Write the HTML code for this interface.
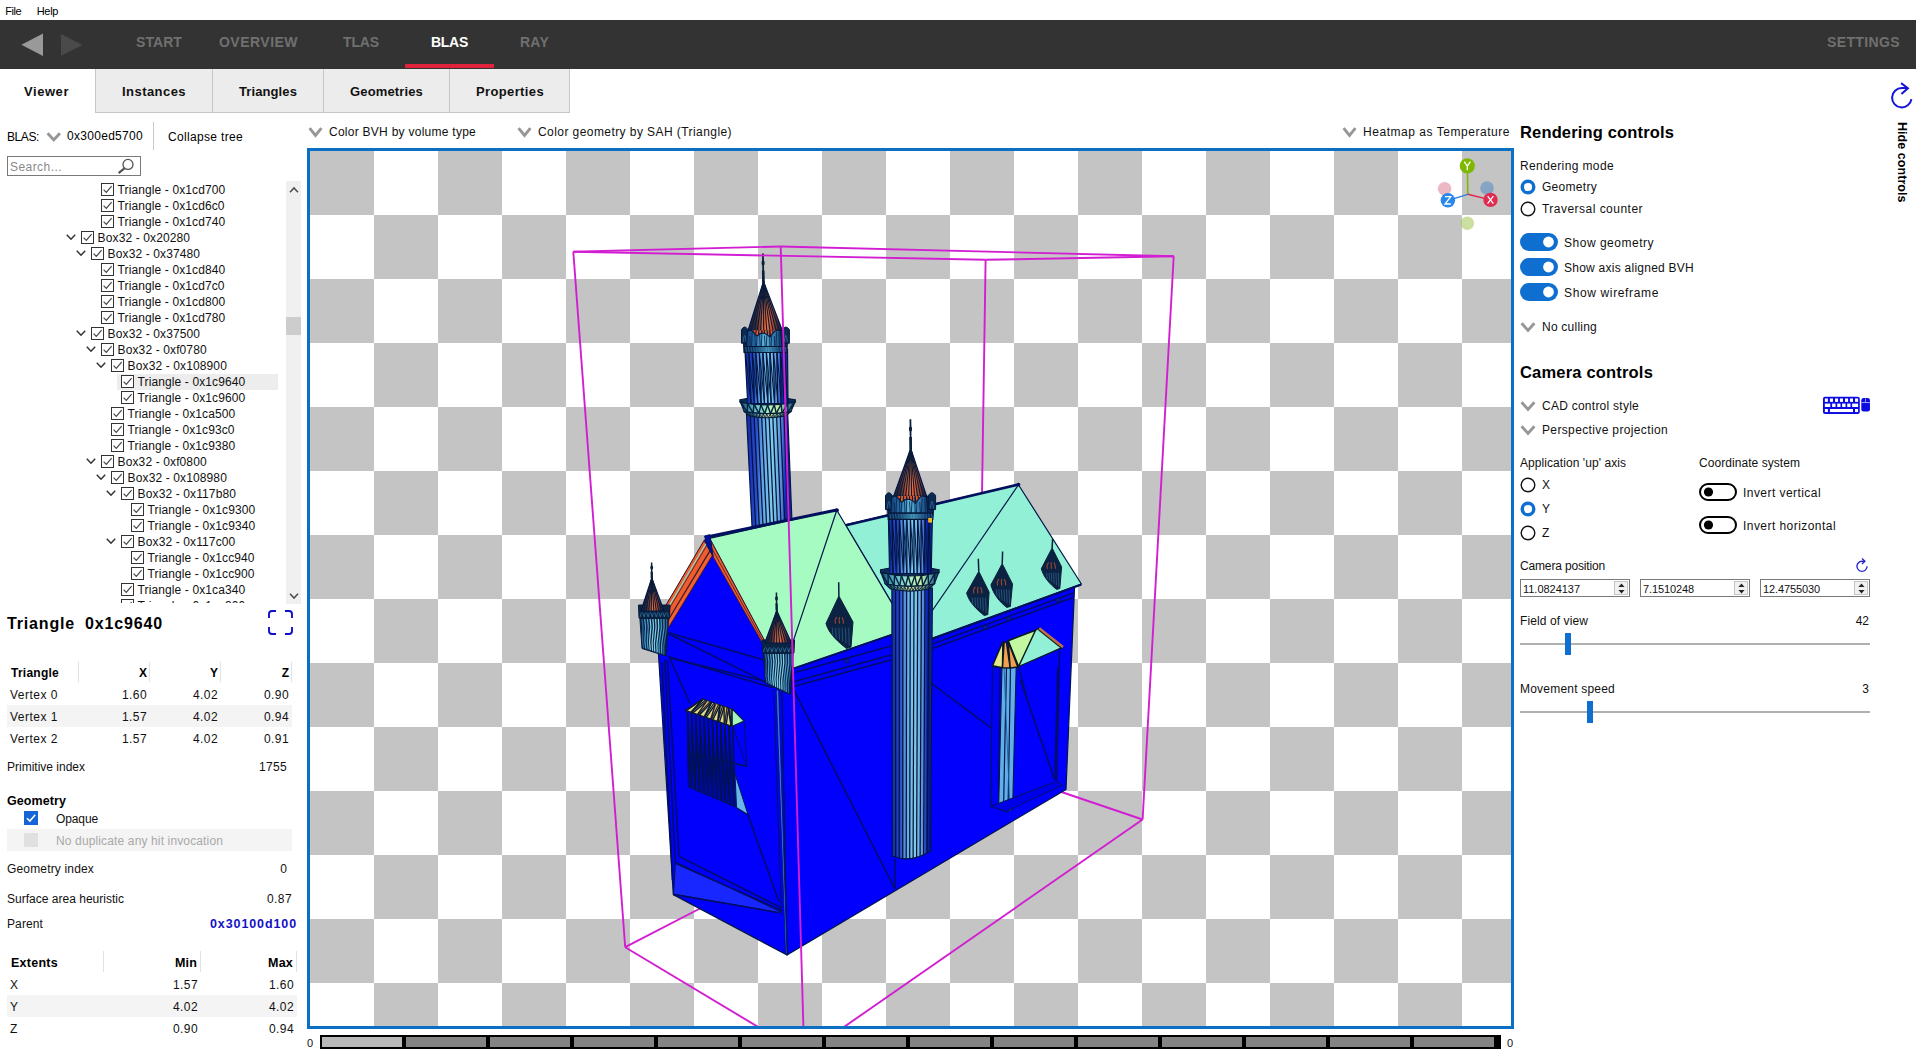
<!DOCTYPE html>
<html><head><meta charset="utf-8"><title>BLAS Viewer</title>
<style>
html,body{margin:0;padding:0;background:#fff;}
body{width:1916px;height:1056px;position:relative;overflow:hidden;font-family:"Liberation Sans",sans-serif;}
.r{position:absolute;display:block;}
.t{position:absolute;white-space:pre;font-family:"Liberation Sans",sans-serif;}
</style></head><body>
<svg class="r" style="left:0;top:0" width="1916" height="1056" viewBox="0 0 1916 1056">
<defs>
<pattern id="chk" x="310" y="151" width="128" height="128" patternUnits="userSpaceOnUse">
<rect width="128" height="128" fill="#fff"/><rect width="64" height="64" fill="#c4c4c4"/><rect x="64" y="64" width="64" height="64" fill="#c4c4c4"/></pattern>
<clipPath id="vp"><rect x="310" y="151" width="1201" height="875"/></clipPath>
<linearGradient id="shaft" x1="0" x2="1" y1="0" y2="0">
<stop offset="0" stop-color="#123088"/><stop offset="0.08" stop-color="#1a34c4"/><stop offset="0.22" stop-color="#2c50c8"/>
<stop offset="0.32" stop-color="#5a96e0"/><stop offset="0.44" stop-color="#70b8e8"/><stop offset="0.56" stop-color="#80cce8"/>
<stop offset="0.68" stop-color="#70b0e4"/><stop offset="0.78" stop-color="#5484d6"/><stop offset="0.85" stop-color="#1028c0"/>
<stop offset="0.93" stop-color="#0a1a80"/><stop offset="1" stop-color="#1c34a8"/></linearGradient>
<linearGradient id="shaftd" x1="0" x2="1" y1="0" y2="0">
<stop offset="0" stop-color="#0a2060"/><stop offset="0.15" stop-color="#1430b0"/><stop offset="0.35" stop-color="#3a78c8"/>
<stop offset="0.5" stop-color="#5ab0dc"/><stop offset="0.62" stop-color="#58a8d8"/><stop offset="0.8" stop-color="#1c44b0"/>
<stop offset="1" stop-color="#0a1c60"/></linearGradient>
<linearGradient id="cone" x1="0" x2="1" y1="0" y2="0">
<stop offset="0" stop-color="#0c2040"/><stop offset="0.25" stop-color="#3a2a38"/><stop offset="0.42" stop-color="#d85a30"/>
<stop offset="0.55" stop-color="#f87038"/><stop offset="0.68" stop-color="#c85030"/><stop offset="0.85" stop-color="#3a2838"/><stop offset="1" stop-color="#0c2040"/></linearGradient>
<linearGradient id="crown" x1="0" x2="1" y1="0" y2="0">
<stop offset="0" stop-color="#0a2248"/><stop offset="0.2" stop-color="#0e3060"/><stop offset="0.4" stop-color="#2a6890"/>
<stop offset="0.55" stop-color="#4a9ab8"/><stop offset="0.7" stop-color="#2a6890"/><stop offset="0.85" stop-color="#0e2c68"/><stop offset="1" stop-color="#0a2248"/></linearGradient>
<linearGradient id="balc2" x1="0" x2="1" y1="0" y2="0">
<stop offset="0" stop-color="#0c3058"/><stop offset="0.2" stop-color="#4a8890"/><stop offset="0.5" stop-color="#d8e498"/>
<stop offset="0.75" stop-color="#90b890"/><stop offset="1" stop-color="#0c3058"/></linearGradient>
<linearGradient id="petal" x1="0" x2="1" y1="0" y2="0">
<stop offset="0" stop-color="#103a70"/><stop offset="0.25" stop-color="#2a70a8"/><stop offset="0.5" stop-color="#62b8d8"/>
<stop offset="0.72" stop-color="#3a88b8"/><stop offset="1" stop-color="#103a70"/></linearGradient>
<linearGradient id="balc" x1="0" x2="1" y1="0" y2="0">
<stop offset="0" stop-color="#0c3058"/><stop offset="0.12" stop-color="#3a8aa8"/><stop offset="0.35" stop-color="#7ad4d0"/>
<stop offset="0.55" stop-color="#b4f4b8"/><stop offset="0.7" stop-color="#c8f0a0"/><stop offset="0.85" stop-color="#5aa8b0"/><stop offset="1" stop-color="#0c3058"/></linearGradient>
</defs>
<rect x="310" y="151" width="1201" height="875" fill="url(#chk)"/>
<g clip-path="url(#vp)">
<line x1="985.6" y1="259.8" x2="982.0" y2="495.0" stroke="#d21ed2" stroke-width="1.9" />
<line x1="625.2" y1="947.2" x2="700.0" y2="908.5" stroke="#d21ed2" stroke-width="1.9" />
<line x1="1142.6" y1="819.5" x2="1060.0" y2="791.5" stroke="#d21ed2" stroke-width="1.9" />
<line x1="762.9" y1="253.6" x2="763.4" y2="282.0" stroke="#0a2038" stroke-width="1.8" />
<ellipse cx="763.1" cy="263.0" rx="1.6" ry="2.7" fill="#0a2038"/>
<line x1="763.2" y1="270.6" x2="763.4" y2="282.0" stroke="#0a2038" stroke-width="2.6" />
<polygon points="763.5,281.5 783.3,333.0 747.3,333.0" fill="url(#cone)" stroke="#001648" stroke-width="1.2" stroke-linejoin="round" />
<line x1="763.5" y1="281.5" x2="750.6" y2="333.0" stroke="#0a1c38" stroke-width="1.15" />
<line x1="763.5" y1="281.5" x2="753.8" y2="333.0" stroke="#0a1c38" stroke-width="1.15" />
<line x1="763.5" y1="281.5" x2="757.1" y2="333.0" stroke="#0a1c38" stroke-width="1.15" />
<line x1="763.5" y1="281.5" x2="760.4" y2="333.0" stroke="#0a1c38" stroke-width="1.15" />
<line x1="763.5" y1="281.5" x2="763.7" y2="333.0" stroke="#0a1c38" stroke-width="1.15" />
<line x1="763.5" y1="281.5" x2="766.9" y2="333.0" stroke="#0a1c38" stroke-width="1.15" />
<line x1="763.5" y1="281.5" x2="770.2" y2="333.0" stroke="#0a1c38" stroke-width="1.15" />
<line x1="763.5" y1="281.5" x2="773.5" y2="333.0" stroke="#0a1c38" stroke-width="1.15" />
<line x1="763.5" y1="281.5" x2="776.8" y2="333.0" stroke="#0a1c38" stroke-width="1.15" />
<line x1="763.5" y1="281.5" x2="780.0" y2="333.0" stroke="#0a1c38" stroke-width="1.15" />
<polygon points="746.5,414.0 787.7,414.0 792.0,523.0 752.2,530.0" fill="url(#shaft)" stroke="#001648" stroke-width="1.2" stroke-linejoin="round" />
<line x1="750.2" y1="414.0" x2="755.8" y2="529.4" stroke="#00143c" stroke-width="1.25" />
<line x1="754.0" y1="414.0" x2="759.4" y2="528.7" stroke="#00143c" stroke-width="1.25" />
<line x1="757.7" y1="414.0" x2="763.1" y2="528.1" stroke="#00143c" stroke-width="1.25" />
<line x1="761.5" y1="414.0" x2="766.7" y2="527.5" stroke="#00143c" stroke-width="1.25" />
<line x1="765.2" y1="414.0" x2="770.3" y2="526.8" stroke="#00143c" stroke-width="1.25" />
<line x1="769.0" y1="414.0" x2="773.9" y2="526.2" stroke="#00143c" stroke-width="1.25" />
<line x1="772.7" y1="414.0" x2="777.5" y2="525.5" stroke="#00143c" stroke-width="1.25" />
<line x1="776.5" y1="414.0" x2="781.1" y2="524.9" stroke="#00143c" stroke-width="1.25" />
<line x1="780.2" y1="414.0" x2="784.8" y2="524.3" stroke="#00143c" stroke-width="1.25" />
<line x1="784.0" y1="414.0" x2="788.4" y2="523.6" stroke="#00143c" stroke-width="1.25" />
<path d="M739.9 399.7 Q767.6 394.0 795.4 399.7 L795.4 402.1 Q767.6 407.6 739.9 402.1 Z" fill="#0c2c58" stroke="#06183a" stroke-width="1.1"/>
<path d="M740.4 402.1 Q767.6 407.8 794.9 402.1 L790.8 411.7 Q767.6 415.6 744.4 411.7 Z" fill="url(#balc)" stroke="#06183a" stroke-width="1.2"/>
<path d="M744.4 411.7 Q767.6 415.6 790.8 411.7 L785.9 415.9 Q767.6 419.5 749.3 415.9 Z" fill="url(#balc2)" stroke="#06183a" stroke-width="1.1"/>
<line x1="740.6" y1="402.1" x2="747.3" y2="412.2" stroke="#06203f" stroke-width="1.45" />
<line x1="747.3" y1="412.2" x2="747.4" y2="403.3" stroke="#06203f" stroke-width="1.45" />
<line x1="747.4" y1="403.3" x2="753.1" y2="412.9" stroke="#06203f" stroke-width="1.45" />
<line x1="753.1" y1="412.9" x2="754.1" y2="404.2" stroke="#06203f" stroke-width="1.45" />
<line x1="754.1" y1="404.2" x2="758.9" y2="413.4" stroke="#06203f" stroke-width="1.45" />
<line x1="758.9" y1="413.4" x2="760.9" y2="404.8" stroke="#06203f" stroke-width="1.45" />
<line x1="760.9" y1="404.8" x2="764.7" y2="413.6" stroke="#06203f" stroke-width="1.45" />
<line x1="764.7" y1="413.6" x2="767.6" y2="404.9" stroke="#06203f" stroke-width="1.45" />
<line x1="767.6" y1="404.9" x2="770.5" y2="413.6" stroke="#06203f" stroke-width="1.45" />
<line x1="770.5" y1="413.6" x2="774.3" y2="404.8" stroke="#06203f" stroke-width="1.45" />
<line x1="774.3" y1="404.8" x2="776.3" y2="413.4" stroke="#06203f" stroke-width="1.45" />
<line x1="776.3" y1="413.4" x2="781.1" y2="404.2" stroke="#06203f" stroke-width="1.45" />
<line x1="781.1" y1="404.2" x2="782.1" y2="412.9" stroke="#06203f" stroke-width="1.45" />
<line x1="782.1" y1="412.9" x2="787.8" y2="403.3" stroke="#06203f" stroke-width="1.45" />
<line x1="787.8" y1="403.3" x2="787.9" y2="412.2" stroke="#06203f" stroke-width="1.45" />
<line x1="787.9" y1="412.2" x2="794.5" y2="402.1" stroke="#06203f" stroke-width="1.45" />
<line x1="745.4" y1="412.1" x2="750.8" y2="416.1" stroke="#06203f" stroke-width="0.9" />
<line x1="750.8" y1="416.1" x2="749.0" y2="412.6" stroke="#06203f" stroke-width="0.9" />
<line x1="749.0" y1="412.6" x2="753.7" y2="416.6" stroke="#06203f" stroke-width="0.9" />
<line x1="753.7" y1="416.6" x2="752.5" y2="413.1" stroke="#06203f" stroke-width="0.9" />
<line x1="752.5" y1="413.1" x2="756.6" y2="417.0" stroke="#06203f" stroke-width="0.9" />
<line x1="756.6" y1="417.0" x2="756.1" y2="413.5" stroke="#06203f" stroke-width="0.9" />
<line x1="756.1" y1="413.5" x2="759.5" y2="417.3" stroke="#06203f" stroke-width="0.9" />
<line x1="759.5" y1="417.3" x2="759.6" y2="413.7" stroke="#06203f" stroke-width="0.9" />
<line x1="759.6" y1="413.7" x2="762.5" y2="417.5" stroke="#06203f" stroke-width="0.9" />
<line x1="762.5" y1="417.5" x2="763.2" y2="413.9" stroke="#06203f" stroke-width="0.9" />
<line x1="763.2" y1="413.9" x2="765.4" y2="417.6" stroke="#06203f" stroke-width="0.9" />
<line x1="765.4" y1="417.6" x2="766.7" y2="414.0" stroke="#06203f" stroke-width="0.9" />
<line x1="766.7" y1="414.0" x2="768.3" y2="417.6" stroke="#06203f" stroke-width="0.9" />
<line x1="768.3" y1="417.6" x2="770.3" y2="414.0" stroke="#06203f" stroke-width="0.9" />
<line x1="770.3" y1="414.0" x2="771.3" y2="417.6" stroke="#06203f" stroke-width="0.9" />
<line x1="771.3" y1="417.6" x2="773.8" y2="413.8" stroke="#06203f" stroke-width="0.9" />
<line x1="773.8" y1="413.8" x2="774.2" y2="417.4" stroke="#06203f" stroke-width="0.9" />
<line x1="774.2" y1="417.4" x2="777.4" y2="413.6" stroke="#06203f" stroke-width="0.9" />
<line x1="777.4" y1="413.6" x2="777.1" y2="417.2" stroke="#06203f" stroke-width="0.9" />
<line x1="777.1" y1="417.2" x2="780.9" y2="413.3" stroke="#06203f" stroke-width="0.9" />
<line x1="780.9" y1="413.3" x2="780.1" y2="416.8" stroke="#06203f" stroke-width="0.9" />
<line x1="780.1" y1="416.8" x2="784.5" y2="412.9" stroke="#06203f" stroke-width="0.9" />
<line x1="784.5" y1="412.9" x2="783.0" y2="416.4" stroke="#06203f" stroke-width="0.9" />
<line x1="783.0" y1="416.4" x2="788.0" y2="412.4" stroke="#06203f" stroke-width="0.9" />
<line x1="788.0" y1="412.4" x2="785.9" y2="415.9" stroke="#06203f" stroke-width="0.9" />
<polygon points="744.9,349.0 787.5,349.0 788.0,403.5 747.7,403.5" fill="url(#shaft)" stroke="#001648" stroke-width="1.2" stroke-linejoin="round" />
<line x1="748.4" y1="349.0" x2="751.1" y2="403.5" stroke="#00143c" stroke-width="1.25" />
<line x1="752.0" y1="349.0" x2="754.4" y2="403.5" stroke="#00143c" stroke-width="1.25" />
<line x1="755.5" y1="349.0" x2="757.8" y2="403.5" stroke="#00143c" stroke-width="1.25" />
<line x1="759.1" y1="349.0" x2="761.1" y2="403.5" stroke="#00143c" stroke-width="1.25" />
<line x1="762.6" y1="349.0" x2="764.5" y2="403.5" stroke="#00143c" stroke-width="1.25" />
<line x1="766.2" y1="349.0" x2="767.9" y2="403.5" stroke="#00143c" stroke-width="1.25" />
<line x1="769.8" y1="349.0" x2="771.2" y2="403.5" stroke="#00143c" stroke-width="1.25" />
<line x1="773.3" y1="349.0" x2="774.6" y2="403.5" stroke="#00143c" stroke-width="1.25" />
<line x1="776.9" y1="349.0" x2="777.9" y2="403.5" stroke="#00143c" stroke-width="1.25" />
<line x1="780.4" y1="349.0" x2="781.3" y2="403.5" stroke="#00143c" stroke-width="1.25" />
<line x1="784.0" y1="349.0" x2="784.6" y2="403.5" stroke="#00143c" stroke-width="1.25" />
<line x1="744.9" y1="349.0" x2="751.1" y2="403.5" stroke="#00143c" stroke-width="1.0" />
<line x1="748.4" y1="349.0" x2="747.7" y2="403.5" stroke="#0a2a6a" stroke-width="0.8" />
<line x1="748.4" y1="349.0" x2="754.4" y2="403.5" stroke="#00143c" stroke-width="1.0" />
<line x1="752.0" y1="349.0" x2="757.8" y2="403.5" stroke="#00143c" stroke-width="1.0" />
<line x1="755.5" y1="349.0" x2="754.4" y2="403.5" stroke="#0a2a6a" stroke-width="0.8" />
<line x1="755.5" y1="349.0" x2="761.1" y2="403.5" stroke="#00143c" stroke-width="1.0" />
<line x1="759.1" y1="349.0" x2="764.5" y2="403.5" stroke="#00143c" stroke-width="1.0" />
<line x1="762.6" y1="349.0" x2="761.1" y2="403.5" stroke="#0a2a6a" stroke-width="0.8" />
<line x1="762.6" y1="349.0" x2="767.9" y2="403.5" stroke="#00143c" stroke-width="1.0" />
<line x1="766.2" y1="349.0" x2="771.2" y2="403.5" stroke="#00143c" stroke-width="1.0" />
<line x1="769.8" y1="349.0" x2="767.9" y2="403.5" stroke="#0a2a6a" stroke-width="0.8" />
<line x1="769.8" y1="349.0" x2="774.6" y2="403.5" stroke="#00143c" stroke-width="1.0" />
<line x1="773.3" y1="349.0" x2="777.9" y2="403.5" stroke="#00143c" stroke-width="1.0" />
<line x1="776.9" y1="349.0" x2="774.6" y2="403.5" stroke="#0a2a6a" stroke-width="0.8" />
<line x1="776.9" y1="349.0" x2="781.3" y2="403.5" stroke="#00143c" stroke-width="1.0" />
<line x1="780.4" y1="349.0" x2="784.6" y2="403.5" stroke="#00143c" stroke-width="1.0" />
<line x1="784.0" y1="349.0" x2="781.3" y2="403.5" stroke="#0a2a6a" stroke-width="0.8" />
<line x1="784.0" y1="349.0" x2="788.0" y2="403.5" stroke="#00143c" stroke-width="1.0" />
<polygon points="742.9,330.5 788.1,330.5 786.8,352.5 744.0,352.5" fill="url(#crown)" stroke="#06183a" stroke-width="1.1" stroke-linejoin="round" />
<polygon points="752.3,330.3 776.5,330.3 774.9,338.2 753.9,338.2" fill="#e45c2c" stroke="none" stroke-width="0" stroke-linejoin="round" />
<line x1="753.4" y1="330.3" x2="752.1" y2="338.2" stroke="#0a1c38" stroke-width="1.1" />
<line x1="756.2" y1="330.3" x2="755.2" y2="338.2" stroke="#0a1c38" stroke-width="1.1" />
<line x1="758.9" y1="330.3" x2="758.2" y2="338.2" stroke="#0a1c38" stroke-width="1.1" />
<line x1="761.7" y1="330.3" x2="761.3" y2="338.2" stroke="#0a1c38" stroke-width="1.1" />
<line x1="764.4" y1="330.3" x2="764.4" y2="338.2" stroke="#0a1c38" stroke-width="1.1" />
<line x1="767.2" y1="330.3" x2="767.5" y2="338.2" stroke="#0a1c38" stroke-width="1.1" />
<line x1="769.9" y1="330.3" x2="770.6" y2="338.2" stroke="#0a1c38" stroke-width="1.1" />
<line x1="772.7" y1="330.3" x2="773.7" y2="338.2" stroke="#0a1c38" stroke-width="1.1" />
<line x1="775.4" y1="330.3" x2="776.8" y2="338.2" stroke="#0a1c38" stroke-width="1.1" />
<path d="M741.5 343.2 L741.5 329.7 Q744.7 324.3 747.9 329.7 L747.9 343.2 Z" fill="#0b2a52" stroke="#06183a" stroke-width="1"/>
<path d="M743.1 342.2 Q744.7 328.7 746.2 342.2" fill="none" stroke="#2a6a98" stroke-width="0.9"/>
<path d="M782.4 343.2 L782.4 329.7 Q785.9 324.3 789.4 329.7 L789.4 343.2 Z" fill="#0b2a52" stroke="#06183a" stroke-width="1"/>
<path d="M784.3 342.2 Q785.9 328.7 787.4 342.2" fill="none" stroke="#2a6a98" stroke-width="0.9"/>
<path d="M747.3 331.8 Q750.1 328.1 753.9 332.9 L756.8 336.2 Q763.3 329.6 770.0 337.1 L773.1 332.9 Q776.9 328.1 780.6 331.6 L782.0 346.5 L746.5 346.5 Z" fill="url(#petal)" stroke="#06183a" stroke-width="1.1"/>
<line x1="749.8" y1="336.2" x2="750.4" y2="346.5" stroke="#0a2a58" stroke-width="0.9" />
<line x1="752.2" y1="331.9" x2="751.6" y2="346.5" stroke="#0a2a58" stroke-width="0.9" />
<line x1="754.7" y1="332.1" x2="755.3" y2="346.5" stroke="#0a2a58" stroke-width="0.9" />
<line x1="757.1" y1="336.2" x2="756.4" y2="346.5" stroke="#0a2a58" stroke-width="0.9" />
<line x1="759.5" y1="333.4" x2="760.2" y2="346.5" stroke="#0a2a58" stroke-width="0.9" />
<line x1="762.0" y1="331.0" x2="761.3" y2="346.5" stroke="#0a2a58" stroke-width="0.9" />
<line x1="764.4" y1="335.4" x2="765.1" y2="346.5" stroke="#0a2a58" stroke-width="0.9" />
<line x1="766.9" y1="334.9" x2="766.2" y2="346.5" stroke="#0a2a58" stroke-width="0.9" />
<line x1="769.3" y1="330.9" x2="770.0" y2="346.5" stroke="#0a2a58" stroke-width="0.9" />
<line x1="771.7" y1="334.0" x2="771.1" y2="346.5" stroke="#0a2a58" stroke-width="0.9" />
<line x1="774.2" y1="336.0" x2="774.8" y2="346.5" stroke="#0a2a58" stroke-width="0.9" />
<line x1="776.6" y1="331.6" x2="775.9" y2="346.5" stroke="#0a2a58" stroke-width="0.9" />
<line x1="779.0" y1="332.4" x2="779.7" y2="346.5" stroke="#0a2a58" stroke-width="0.9" />
<line x1="744.0" y1="346.5" x2="786.8" y2="346.5" stroke="#06183a" stroke-width="1.2" />
<line x1="745.7" y1="347.0" x2="746.6" y2="351.6" stroke="#2a6c98" stroke-width="0.8" />
<line x1="748.3" y1="347.0" x2="749.2" y2="351.6" stroke="#2a6c98" stroke-width="0.8" />
<line x1="751.0" y1="347.0" x2="751.9" y2="351.6" stroke="#2a6c98" stroke-width="0.8" />
<line x1="753.6" y1="347.0" x2="754.5" y2="351.6" stroke="#2a6c98" stroke-width="0.8" />
<line x1="756.3" y1="347.0" x2="757.1" y2="351.6" stroke="#2a6c98" stroke-width="0.8" />
<line x1="758.9" y1="347.0" x2="759.8" y2="351.6" stroke="#2a6c98" stroke-width="0.8" />
<line x1="761.5" y1="347.0" x2="762.4" y2="351.6" stroke="#2a6c98" stroke-width="0.8" />
<line x1="764.2" y1="347.0" x2="765.1" y2="351.6" stroke="#2a6c98" stroke-width="0.8" />
<line x1="766.8" y1="347.0" x2="767.7" y2="351.6" stroke="#2a6c98" stroke-width="0.8" />
<line x1="769.5" y1="347.0" x2="770.4" y2="351.6" stroke="#2a6c98" stroke-width="0.8" />
<line x1="772.1" y1="347.0" x2="773.0" y2="351.6" stroke="#2a6c98" stroke-width="0.8" />
<line x1="774.8" y1="347.0" x2="775.6" y2="351.6" stroke="#2a6c98" stroke-width="0.8" />
<line x1="777.4" y1="347.0" x2="778.3" y2="351.6" stroke="#2a6c98" stroke-width="0.8" />
<line x1="780.1" y1="347.0" x2="780.9" y2="351.6" stroke="#2a6c98" stroke-width="0.8" />
<line x1="782.7" y1="347.0" x2="783.6" y2="351.6" stroke="#2a6c98" stroke-width="0.8" />
<line x1="785.3" y1="347.0" x2="786.2" y2="351.6" stroke="#2a6c98" stroke-width="0.8" />
<polygon points="781.0,672.0 907.0,627.0 1074.6,586.0 1066.0,789.4 787.0,955.0" fill="#0000fc" stroke="#001648" stroke-width="1.2" stroke-linejoin="round" />
<polygon points="656.5,622.0 706.7,537.0 781.5,672.6 787.0,955.0 673.3,894.6" fill="#0000fc" stroke="#001648" stroke-width="1.2" stroke-linejoin="round" />
<polygon points="675.5,862.0 780.6,911.7 777.7,912.4 673.5,894.0" fill="#1826ff" stroke="#001648" stroke-width="1" stroke-linejoin="round" />
<line x1="668.4" y1="632.7" x2="763.5" y2="659.7" stroke="#000c66" stroke-width="1.5" />
<line x1="668.4" y1="656.8" x2="773.5" y2="688.0" stroke="#000c66" stroke-width="1.5" />
<line x1="669.0" y1="634.0" x2="773.5" y2="686.0" stroke="#000c66" stroke-width="1.5" />
<line x1="668.6" y1="657.5" x2="764.0" y2="681.0" stroke="#000c66" stroke-width="1.5" />
<line x1="669.8" y1="658.2" x2="690.0" y2="703.5" stroke="#000c66" stroke-width="1.5" />
<line x1="664.8" y1="660.0" x2="675.4" y2="863.3" stroke="#000c66" stroke-width="1.5" />
<line x1="675.4" y1="863.3" x2="782.0" y2="910.6" stroke="#000c66" stroke-width="1.5" />
<line x1="679.0" y1="856.3" x2="780.6" y2="907.4" stroke="#000c66" stroke-width="1.5" />
<line x1="667.5" y1="660.0" x2="679.0" y2="856.3" stroke="#000c66" stroke-width="1.5" />
<line x1="662.0" y1="662.0" x2="672.5" y2="880.0" stroke="#000c66" stroke-width="1.5" />
<line x1="748.0" y1="815.0" x2="779.0" y2="902.0" stroke="#000c66" stroke-width="1.5" />
<line x1="673.3" y1="894.6" x2="777.7" y2="912.4" stroke="#000c66" stroke-width="1.5" />
<line x1="736.0" y1="807.0" x2="748.5" y2="815.0" stroke="#000c66" stroke-width="1.5" />
<polygon points="776.2,690.0 778.6,690.0 787.0,955.0 785.6,953.0" fill="#3a78f0" stroke="#001060" stroke-width="0.8" stroke-linejoin="round" />
<line x1="773.8" y1="690.0" x2="781.5" y2="915.0" stroke="#00106a" stroke-width="1.1" />
<line x1="792.8" y1="688.0" x2="894.4" y2="887.8" stroke="#000c66" stroke-width="1.5" />
<line x1="931.0" y1="683.0" x2="990.6" y2="727.6" stroke="#000c66" stroke-width="1.5" />
<line x1="1020.5" y1="680.0" x2="1054.5" y2="779.4" stroke="#000c66" stroke-width="1.5" />
<line x1="895.0" y1="859.0" x2="895.0" y2="889.3" stroke="#000c66" stroke-width="1.5" />
<line x1="794.5" y1="686.3" x2="891.0" y2="660.0" stroke="#000c66" stroke-width="1.5" />
<line x1="794.5" y1="681.5" x2="891.0" y2="655.0" stroke="#000c66" stroke-width="1.5" />
<line x1="794.8" y1="672.5" x2="891.0" y2="646.0" stroke="#000c66" stroke-width="1.5" />
<line x1="932.4" y1="644.0" x2="1073.5" y2="593.0" stroke="#000c66" stroke-width="1.5" />
<line x1="932.4" y1="648.5" x2="1073.2" y2="597.5" stroke="#000c66" stroke-width="1.5" />
<line x1="1059.6" y1="651.0" x2="1056.5" y2="781.0" stroke="#000c66" stroke-width="1.5" />
<line x1="1057.8" y1="668.0" x2="1054.8" y2="780.0" stroke="#000c66" stroke-width="1.5" />
<polygon points="845.5,524.9 1018.3,484.5 1081.4,584.0 907.0,647.5 907.4,629.4" fill="#92f0d6" stroke="#001648" stroke-width="1.2" stroke-linejoin="round" />
<line x1="1018.3" y1="485.0" x2="973.6" y2="550.5" stroke="#001648" stroke-width="1.2" />
<line x1="973.6" y1="550.5" x2="932.0" y2="611.0" stroke="#001648" stroke-width="1.2" />
<line x1="846.0" y1="525.2" x2="1018.3" y2="484.6" stroke="#00105c" stroke-width="2.6" />
<line x1="1081.4" y1="584.5" x2="932.0" y2="638.9" stroke="#00105c" stroke-width="2.2" />
<polygon points="709.5,538.4 836.7,510.0 907.4,629.4 781.5,672.6" fill="#a6fbc3" stroke="#001648" stroke-width="1.2" stroke-linejoin="round" />
<line x1="836.7" y1="510.5" x2="793.4" y2="640.6" stroke="#001648" stroke-width="1.2" />
<line x1="707.0" y1="537.0" x2="836.7" y2="510.0" stroke="#00105c" stroke-width="3.0" />
<line x1="781.5" y1="672.6" x2="907.4" y2="629.4" stroke="#00105c" stroke-width="2.0" />
<circle cx="836.9" cy="510.2" r="2" fill="#00105c"/><circle cx="1018.5" cy="484.6" r="1.8" fill="#00105c"/>
<polygon points="704.0,540.5 661.5,612.8 668.4,627.8 712.4,555.4" fill="#ee5c30" stroke="#3a1a28" stroke-width="1" stroke-linejoin="round" />
<line x1="705.8" y1="543.8" x2="663.0" y2="616.1" stroke="#7fe0cc" stroke-width="1.2" />
<line x1="706.8" y1="545.4" x2="663.8" y2="617.8" stroke="#3a1a28" stroke-width="0.8" />
<line x1="709.9" y1="550.9" x2="666.3" y2="623.3" stroke="#3a1a28" stroke-width="1.2" />
<line x1="711.2" y1="553.3" x2="667.4" y2="625.7" stroke="#f06a38" stroke-width="1.0" />
<polygon points="711.0,541.0 764.2,640.0 762.0,642.5 712.4,555.4" fill="#ee5c30" stroke="#3a1a28" stroke-width="0.9" stroke-linejoin="round" />
<line x1="711.6" y1="548.0" x2="763.0" y2="641.3" stroke="#3a1a28" stroke-width="0.8" />
<polygon points="704.5,536.0 709.8,534.6 713.2,556.5 707.0,545.0" fill="#00109a" stroke="#00105c" stroke-width="0.8" stroke-linejoin="round" />
<line x1="838.7" y1="582.2" x2="838.9" y2="596.0" stroke="#0a2038" stroke-width="1.5" />
<path d="M838.9 596.0 L826.0 623.4 C828.5 633.9 839.5 643.0 846.5 648.5 L851.0 647.0 L853.0 622.0 Z" fill="#0c2242" stroke="#0a1e3a" stroke-width="1"/>
<path d="M835.5 623.7 q-1.2 -4 1.4 -6.5" fill="none" stroke="#a04a30" stroke-width="1.15" opacity="0.9"/>
<path d="M839.5 623.7 q-0.6 -4 0.0 -6.5" fill="none" stroke="#a04a30" stroke-width="1.15" opacity="0.9"/>
<path d="M843.5 623.7 q0.0 -4 -1.4 -6.5" fill="none" stroke="#a04a30" stroke-width="1.15" opacity="0.9"/>
<line x1="832.3" y1="627.7" x2="832.9" y2="636.2" stroke="#2a5c88" stroke-width="0.8" />
<line x1="835.6" y1="627.7" x2="836.2" y2="638.0" stroke="#2a5c88" stroke-width="0.8" />
<line x1="838.9" y1="627.7" x2="839.5" y2="639.8" stroke="#2a5c88" stroke-width="0.8" />
<line x1="842.1" y1="627.7" x2="842.7" y2="641.7" stroke="#2a5c88" stroke-width="0.8" />
<line x1="845.4" y1="627.7" x2="846.0" y2="643.5" stroke="#2a5c88" stroke-width="0.8" />
<line x1="848.7" y1="627.7" x2="849.3" y2="645.4" stroke="#2a5c88" stroke-width="0.8" />
<line x1="978.3" y1="558.8" x2="978.8" y2="571.4" stroke="#0a2038" stroke-width="1.5" />
<path d="M978.8 571.4 L966.6 593.0 C969.1 602.5 977.2 610.0 984.2 615.5 L987.8 614.6 L989.1 592.1 Z" fill="#0c2242" stroke="#0a1e3a" stroke-width="1"/>
<path d="M973.9 593.5 q-1.2 -4 1.4 -6.5" fill="none" stroke="#a04a30" stroke-width="1.15" opacity="0.9"/>
<path d="M977.9 593.5 q-0.6 -4 0.0 -6.5" fill="none" stroke="#a04a30" stroke-width="1.15" opacity="0.9"/>
<path d="M981.9 593.5 q0.0 -4 -1.4 -6.5" fill="none" stroke="#a04a30" stroke-width="1.15" opacity="0.9"/>
<line x1="972.2" y1="597.5" x2="972.8" y2="604.5" stroke="#2a5c88" stroke-width="0.8" />
<line x1="974.9" y1="597.5" x2="975.5" y2="606.2" stroke="#2a5c88" stroke-width="0.8" />
<line x1="977.5" y1="597.5" x2="978.1" y2="607.8" stroke="#2a5c88" stroke-width="0.8" />
<line x1="980.2" y1="597.5" x2="980.8" y2="609.4" stroke="#2a5c88" stroke-width="0.8" />
<line x1="982.8" y1="597.5" x2="983.4" y2="611.1" stroke="#2a5c88" stroke-width="0.8" />
<line x1="985.5" y1="597.5" x2="986.1" y2="612.7" stroke="#2a5c88" stroke-width="0.8" />
<line x1="1002.6" y1="551.6" x2="1002.2" y2="563.7" stroke="#0a2038" stroke-width="1.5" />
<path d="M1002.2 563.7 L990.9 584.9 C993.4 594.4 999.7 601.9 1006.7 607.4 L1010.3 606.5 L1012.5 584.0 Z" fill="#0c2242" stroke="#0a1e3a" stroke-width="1"/>
<path d="M997.7 585.5 q-1.2 -4 1.4 -6.5" fill="none" stroke="#a04a30" stroke-width="1.15" opacity="0.9"/>
<path d="M1001.7 585.5 q-0.6 -4 0.0 -6.5" fill="none" stroke="#a04a30" stroke-width="1.15" opacity="0.9"/>
<path d="M1005.7 585.5 q0.0 -4 -1.4 -6.5" fill="none" stroke="#a04a30" stroke-width="1.15" opacity="0.9"/>
<line x1="996.4" y1="589.5" x2="997.0" y2="596.4" stroke="#2a5c88" stroke-width="0.8" />
<line x1="998.9" y1="589.5" x2="999.5" y2="598.1" stroke="#2a5c88" stroke-width="0.8" />
<line x1="1001.4" y1="589.5" x2="1002.0" y2="599.7" stroke="#2a5c88" stroke-width="0.8" />
<line x1="1004.0" y1="589.5" x2="1004.6" y2="601.3" stroke="#2a5c88" stroke-width="0.8" />
<line x1="1006.5" y1="589.5" x2="1007.1" y2="603.0" stroke="#2a5c88" stroke-width="0.8" />
<line x1="1009.0" y1="589.5" x2="1009.6" y2="604.6" stroke="#2a5c88" stroke-width="0.8" />
<line x1="1052.6" y1="539.0" x2="1052.1" y2="548.0" stroke="#0a2038" stroke-width="1.5" />
<path d="M1052.1 548.0 L1041.3 568.7 C1043.8 577.4 1049.6 583.9 1056.6 589.4 L1059.8 588.5 L1061.6 566.9 Z" fill="#0c2242" stroke="#0a1e3a" stroke-width="1"/>
<path d="M1047.4 568.8 q-1.2 -4 1.4 -6.5" fill="none" stroke="#a04a30" stroke-width="1.15" opacity="0.9"/>
<path d="M1051.4 568.8 q-0.6 -4 0.0 -6.5" fill="none" stroke="#a04a30" stroke-width="1.15" opacity="0.9"/>
<path d="M1055.4 568.8 q0.0 -4 -1.4 -6.5" fill="none" stroke="#a04a30" stroke-width="1.15" opacity="0.9"/>
<line x1="1046.6" y1="572.8" x2="1047.2" y2="579.1" stroke="#2a5c88" stroke-width="0.8" />
<line x1="1049.0" y1="572.8" x2="1049.6" y2="580.6" stroke="#2a5c88" stroke-width="0.8" />
<line x1="1051.3" y1="572.8" x2="1051.9" y2="582.1" stroke="#2a5c88" stroke-width="0.8" />
<line x1="1053.6" y1="572.8" x2="1054.2" y2="583.7" stroke="#2a5c88" stroke-width="0.8" />
<line x1="1055.9" y1="572.8" x2="1056.5" y2="585.2" stroke="#2a5c88" stroke-width="0.8" />
<line x1="1058.3" y1="572.8" x2="1058.9" y2="586.8" stroke="#2a5c88" stroke-width="0.8" />
<polygon points="639.0,606.0 669.5,606.0 666.0,656.0 642.0,648.5" fill="#0a2246" stroke="#081c3a" stroke-width="1.0" stroke-linejoin="round" />
<path d="M641.9 619.0 q1.8 7.2 0.9 14.4 t0.9 14.4" fill="none" stroke="#2a64a0" stroke-width="1.25"/>
<path d="M644.6 619.0 q1.7 7.4 0.6 14.8 t0.6 14.8" fill="none" stroke="#4a9cc8" stroke-width="1.25"/>
<path d="M647.4 619.0 q1.6 7.6 0.4 15.2 t0.4 15.2" fill="none" stroke="#4a9cc8" stroke-width="1.25"/>
<path d="M650.1 619.0 q1.5 7.8 0.1 15.6 t0.1 15.6" fill="none" stroke="#7fd0e4" stroke-width="1.25"/>
<path d="M652.9 619.0 q1.3 8.0 -0.1 15.9 t-0.1 15.9" fill="none" stroke="#7fd0e4" stroke-width="1.25"/>
<path d="M655.6 619.0 q1.2 8.2 -0.4 16.3 t-0.4 16.3" fill="none" stroke="#7fd0e4" stroke-width="1.25"/>
<path d="M658.4 619.0 q1.1 8.3 -0.6 16.7 t-0.6 16.7" fill="none" stroke="#7fd0e4" stroke-width="1.25"/>
<path d="M661.1 619.0 q1.0 8.5 -0.9 17.1 t-0.9 17.1" fill="none" stroke="#4a9cc8" stroke-width="1.25"/>
<path d="M663.9 619.0 q0.8 8.7 -1.1 17.4 t-1.1 17.4" fill="none" stroke="#4a9cc8" stroke-width="1.25"/>
<path d="M666.6 619.0 q0.7 8.9 -1.4 17.8 t-1.4 17.8" fill="none" stroke="#2a64a0" stroke-width="1.25"/>
<polygon points="638.5,605.0 670.0,605.0 669.5,618.0 639.0,618.0" fill="#0b2444" stroke="#081c3a" stroke-width="1" stroke-linejoin="round" />
<path d="M640.0 617.0 Q642.0 608.0 644.1 617.0" fill="none" stroke="#2c6a94" stroke-width="0.9"/>
<path d="M644.1 617.0 Q646.1 608.0 648.1 617.0" fill="none" stroke="#2c6a94" stroke-width="0.9"/>
<path d="M648.1 617.0 Q650.2 608.0 652.2 617.0" fill="none" stroke="#2c6a94" stroke-width="0.9"/>
<path d="M652.2 617.0 Q654.2 608.0 656.3 617.0" fill="none" stroke="#2c6a94" stroke-width="0.9"/>
<path d="M656.3 617.0 Q658.3 608.0 660.4 617.0" fill="none" stroke="#2c6a94" stroke-width="0.9"/>
<path d="M660.4 617.0 Q662.4 608.0 664.4 617.0" fill="none" stroke="#2c6a94" stroke-width="0.9"/>
<path d="M664.4 617.0 Q666.5 608.0 668.5 617.0" fill="none" stroke="#2c6a94" stroke-width="0.9"/>
<polygon points="651.8,578.0 664.0,611.0 641.0,611.0" fill="url(#cone)" stroke="#001648" stroke-width="1.2" stroke-linejoin="round" />
<line x1="651.8" y1="578.0" x2="643.6" y2="611.0" stroke="#0a1c38" stroke-width="1.15" />
<line x1="651.8" y1="578.0" x2="646.1" y2="611.0" stroke="#0a1c38" stroke-width="1.15" />
<line x1="651.8" y1="578.0" x2="648.7" y2="611.0" stroke="#0a1c38" stroke-width="1.15" />
<line x1="651.8" y1="578.0" x2="651.2" y2="611.0" stroke="#0a1c38" stroke-width="1.15" />
<line x1="651.8" y1="578.0" x2="653.8" y2="611.0" stroke="#0a1c38" stroke-width="1.15" />
<line x1="651.8" y1="578.0" x2="656.3" y2="611.0" stroke="#0a1c38" stroke-width="1.15" />
<line x1="651.8" y1="578.0" x2="658.9" y2="611.0" stroke="#0a1c38" stroke-width="1.15" />
<line x1="651.8" y1="578.0" x2="661.4" y2="611.0" stroke="#0a1c38" stroke-width="1.15" />
<line x1="651.6" y1="562.5" x2="651.8" y2="578.0" stroke="#0a2038" stroke-width="1.5" />
<ellipse cx="651.7" cy="567.6" rx="1.4" ry="2.2" fill="#0a2038"/>
<line x1="651.7" y1="571.8" x2="651.8" y2="578.0" stroke="#0a2038" stroke-width="2.3" />
<polygon points="762.5,641.0 794.0,641.0 790.5,694.5 765.5,683.0" fill="#0a2246" stroke="#081c3a" stroke-width="1.0" stroke-linejoin="round" />
<path d="M765.3 654.0 q1.8 7.1 0.9 14.3 t0.9 14.3" fill="none" stroke="#2a64a0" stroke-width="1.25"/>
<path d="M767.9 654.0 q1.7 7.4 0.7 14.8 t0.7 14.8" fill="none" stroke="#4a9cc8" stroke-width="1.25"/>
<path d="M770.5 654.0 q1.6 7.7 0.4 15.3 t0.4 15.3" fill="none" stroke="#4a9cc8" stroke-width="1.25"/>
<path d="M773.1 654.0 q1.5 7.9 0.2 15.8 t0.2 15.8" fill="none" stroke="#7fd0e4" stroke-width="1.25"/>
<path d="M775.7 654.0 q1.4 8.2 -0.0 16.4 t-0.0 16.4" fill="none" stroke="#7fd0e4" stroke-width="1.25"/>
<path d="M778.2 654.0 q1.3 8.4 -0.2 16.9 t-0.2 16.9" fill="none" stroke="#7fd0e4" stroke-width="1.25"/>
<path d="M780.8 654.0 q1.2 8.7 -0.5 17.4 t-0.5 17.4" fill="none" stroke="#7fd0e4" stroke-width="1.25"/>
<path d="M783.4 654.0 q1.0 9.0 -0.7 17.9 t-0.7 17.9" fill="none" stroke="#7fd0e4" stroke-width="1.25"/>
<path d="M786.0 654.0 q0.9 9.2 -0.9 18.4 t-0.9 18.4" fill="none" stroke="#4a9cc8" stroke-width="1.25"/>
<path d="M788.6 654.0 q0.8 9.5 -1.2 19.0 t-1.2 19.0" fill="none" stroke="#4a9cc8" stroke-width="1.25"/>
<path d="M791.2 654.0 q0.7 9.7 -1.4 19.5 t-1.4 19.5" fill="none" stroke="#2a64a0" stroke-width="1.25"/>
<polygon points="762.0,640.0 794.5,640.0 794.0,653.0 762.5,653.0" fill="#0b2444" stroke="#081c3a" stroke-width="1" stroke-linejoin="round" />
<path d="M763.5 652.0 Q765.6 643.0 767.7 652.0" fill="none" stroke="#2c6a94" stroke-width="0.9"/>
<path d="M767.7 652.0 Q769.8 643.0 771.9 652.0" fill="none" stroke="#2c6a94" stroke-width="0.9"/>
<path d="M771.9 652.0 Q774.0 643.0 776.1 652.0" fill="none" stroke="#2c6a94" stroke-width="0.9"/>
<path d="M776.1 652.0 Q778.2 643.0 780.4 652.0" fill="none" stroke="#2c6a94" stroke-width="0.9"/>
<path d="M780.4 652.0 Q782.5 643.0 784.6 652.0" fill="none" stroke="#2c6a94" stroke-width="0.9"/>
<path d="M784.6 652.0 Q786.7 643.0 788.8 652.0" fill="none" stroke="#2c6a94" stroke-width="0.9"/>
<path d="M788.8 652.0 Q790.9 643.0 793.0 652.0" fill="none" stroke="#2c6a94" stroke-width="0.9"/>
<polygon points="776.7,610.6 791.5,643.0 764.8,643.0" fill="url(#cone)" stroke="#001648" stroke-width="1.2" stroke-linejoin="round" />
<line x1="776.7" y1="610.6" x2="767.8" y2="643.0" stroke="#0a1c38" stroke-width="1.15" />
<line x1="776.7" y1="610.6" x2="770.7" y2="643.0" stroke="#0a1c38" stroke-width="1.15" />
<line x1="776.7" y1="610.6" x2="773.7" y2="643.0" stroke="#0a1c38" stroke-width="1.15" />
<line x1="776.7" y1="610.6" x2="776.7" y2="643.0" stroke="#0a1c38" stroke-width="1.15" />
<line x1="776.7" y1="610.6" x2="779.6" y2="643.0" stroke="#0a1c38" stroke-width="1.15" />
<line x1="776.7" y1="610.6" x2="782.6" y2="643.0" stroke="#0a1c38" stroke-width="1.15" />
<line x1="776.7" y1="610.6" x2="785.6" y2="643.0" stroke="#0a1c38" stroke-width="1.15" />
<line x1="776.7" y1="610.6" x2="788.5" y2="643.0" stroke="#0a1c38" stroke-width="1.15" />
<line x1="776.4" y1="592.4" x2="776.7" y2="610.6" stroke="#0a2038" stroke-width="1.5" />
<ellipse cx="776.5" cy="598.4" rx="1.4" ry="2.2" fill="#0a2038"/>
<line x1="776.6" y1="603.3" x2="776.7" y2="610.6" stroke="#0a2038" stroke-width="2.3" />
<polygon points="687.5,711.0 733.0,727.0 736.0,807.0 688.5,787.0" fill="#0000f4" stroke="#00106a" stroke-width="1.2" stroke-linejoin="round" />
<line x1="687.5" y1="711.0" x2="690.9" y2="788.0" stroke="#00124e" stroke-width="1.7" />
<line x1="690.9" y1="788.0" x2="691.6" y2="712.5" stroke="#00124e" stroke-width="1.2" />
<line x1="687.5" y1="711.0" x2="688.5" y2="787.0" stroke="#00124e" stroke-width="1.0" />
<line x1="691.6" y1="712.5" x2="695.2" y2="789.8" stroke="#00124e" stroke-width="1.7" />
<line x1="695.2" y1="789.8" x2="695.8" y2="713.9" stroke="#00124e" stroke-width="1.2" />
<line x1="691.6" y1="712.5" x2="692.8" y2="788.8" stroke="#00124e" stroke-width="1.0" />
<line x1="695.8" y1="713.9" x2="699.5" y2="791.6" stroke="#00124e" stroke-width="1.7" />
<line x1="699.5" y1="791.6" x2="699.9" y2="715.4" stroke="#00124e" stroke-width="1.2" />
<line x1="695.8" y1="713.9" x2="697.1" y2="790.6" stroke="#00124e" stroke-width="1.0" />
<line x1="699.9" y1="715.4" x2="703.8" y2="793.5" stroke="#00124e" stroke-width="1.7" />
<line x1="703.8" y1="793.5" x2="704.0" y2="716.8" stroke="#00124e" stroke-width="1.2" />
<line x1="699.9" y1="715.4" x2="701.5" y2="792.5" stroke="#00124e" stroke-width="1.0" />
<line x1="704.0" y1="716.8" x2="708.1" y2="795.3" stroke="#00124e" stroke-width="1.7" />
<line x1="708.1" y1="795.3" x2="708.2" y2="718.3" stroke="#00124e" stroke-width="1.2" />
<line x1="704.0" y1="716.8" x2="705.8" y2="794.3" stroke="#00124e" stroke-width="1.0" />
<line x1="708.2" y1="718.3" x2="712.5" y2="797.1" stroke="#00124e" stroke-width="1.7" />
<line x1="712.5" y1="797.1" x2="712.3" y2="719.7" stroke="#00124e" stroke-width="1.2" />
<line x1="708.2" y1="718.3" x2="710.1" y2="796.1" stroke="#00124e" stroke-width="1.0" />
<line x1="712.3" y1="719.7" x2="716.8" y2="798.9" stroke="#00124e" stroke-width="1.7" />
<line x1="716.8" y1="798.9" x2="716.5" y2="721.2" stroke="#00124e" stroke-width="1.2" />
<line x1="712.3" y1="719.7" x2="714.4" y2="797.9" stroke="#00124e" stroke-width="1.0" />
<line x1="716.5" y1="721.2" x2="721.1" y2="800.7" stroke="#00124e" stroke-width="1.7" />
<line x1="721.1" y1="800.7" x2="720.6" y2="722.6" stroke="#00124e" stroke-width="1.2" />
<line x1="716.5" y1="721.2" x2="718.7" y2="799.7" stroke="#00124e" stroke-width="1.0" />
<line x1="720.6" y1="722.6" x2="725.4" y2="802.5" stroke="#00124e" stroke-width="1.7" />
<line x1="725.4" y1="802.5" x2="724.7" y2="724.1" stroke="#00124e" stroke-width="1.2" />
<line x1="720.6" y1="722.6" x2="723.0" y2="801.5" stroke="#00124e" stroke-width="1.0" />
<line x1="724.7" y1="724.1" x2="729.7" y2="804.4" stroke="#00124e" stroke-width="1.7" />
<line x1="729.7" y1="804.4" x2="728.9" y2="725.5" stroke="#00124e" stroke-width="1.2" />
<line x1="724.7" y1="724.1" x2="727.4" y2="803.4" stroke="#00124e" stroke-width="1.0" />
<line x1="728.9" y1="725.5" x2="734.1" y2="806.2" stroke="#00124e" stroke-width="1.7" />
<line x1="734.1" y1="806.2" x2="733.0" y2="727.0" stroke="#00124e" stroke-width="1.2" />
<line x1="728.9" y1="725.5" x2="731.7" y2="805.2" stroke="#00124e" stroke-width="1.0" />
<line x1="687.5" y1="752.8" x2="746.5" y2="766.3" stroke="#00145a" stroke-width="1.6" />
<polygon points="735.0,774.0 748.0,814.6 736.5,807.5" fill="#66b6ea" stroke="#00145a" stroke-width="1" stroke-linejoin="round" />
<line x1="733.0" y1="727.0" x2="746.5" y2="766.3" stroke="#00106a" stroke-width="1.0" />
<line x1="744.3" y1="722.2" x2="746.8" y2="766.0" stroke="#00106a" stroke-width="1.0" />
<polygon points="702.4,699.0 732.2,709.2 732.2,726.2 685.4,710.4" fill="#ead68a" stroke="#0c1c30" stroke-width="1.2" stroke-linejoin="round" />
<line x1="703.0" y1="699.2" x2="686.1" y2="710.6" stroke="#0c1c30" stroke-width="1.5" />
<line x1="703.0" y1="699.2" x2="691.1" y2="712.3" stroke="#0c1c30" stroke-width="1.9" />
<line x1="705.6" y1="700.1" x2="691.1" y2="712.3" stroke="#0c1c30" stroke-width="1.3" />
<line x1="707.3" y1="700.7" x2="692.8" y2="712.9" stroke="#0c1c30" stroke-width="1.5" />
<line x1="707.3" y1="700.7" x2="697.8" y2="714.6" stroke="#0c1c30" stroke-width="1.9" />
<line x1="709.9" y1="701.5" x2="697.8" y2="714.6" stroke="#0c1c30" stroke-width="1.3" />
<polygon points="707.3,700.7 709.9,701.5 697.8,714.6" fill="#f0b060" stroke="#0c1c30" stroke-width="0.8" stroke-linejoin="round" />
<line x1="711.6" y1="702.1" x2="699.4" y2="715.1" stroke="#0c1c30" stroke-width="1.5" />
<line x1="711.6" y1="702.1" x2="704.5" y2="716.8" stroke="#0c1c30" stroke-width="1.9" />
<line x1="714.1" y1="703.0" x2="704.5" y2="716.8" stroke="#0c1c30" stroke-width="1.3" />
<line x1="715.8" y1="703.6" x2="706.1" y2="717.4" stroke="#0c1c30" stroke-width="1.5" />
<line x1="715.8" y1="703.6" x2="711.1" y2="719.1" stroke="#0c1c30" stroke-width="1.9" />
<line x1="718.4" y1="704.5" x2="711.1" y2="719.1" stroke="#0c1c30" stroke-width="1.3" />
<polygon points="715.8,703.6 718.4,704.5 711.1,719.1" fill="#f0b060" stroke="#0c1c30" stroke-width="0.8" stroke-linejoin="round" />
<line x1="720.1" y1="705.0" x2="712.8" y2="719.7" stroke="#0c1c30" stroke-width="1.5" />
<line x1="720.1" y1="705.0" x2="717.8" y2="721.3" stroke="#0c1c30" stroke-width="1.9" />
<line x1="722.6" y1="705.9" x2="717.8" y2="721.3" stroke="#0c1c30" stroke-width="1.3" />
<line x1="724.3" y1="706.5" x2="719.5" y2="721.9" stroke="#0c1c30" stroke-width="1.5" />
<line x1="724.3" y1="706.5" x2="724.5" y2="723.6" stroke="#0c1c30" stroke-width="1.9" />
<line x1="726.9" y1="707.4" x2="724.5" y2="723.6" stroke="#0c1c30" stroke-width="1.3" />
<polygon points="724.3,706.5 726.9,707.4 724.5,723.6" fill="#f0b060" stroke="#0c1c30" stroke-width="0.8" stroke-linejoin="round" />
<line x1="728.6" y1="708.0" x2="726.2" y2="724.2" stroke="#0c1c30" stroke-width="1.5" />
<line x1="728.6" y1="708.0" x2="731.2" y2="725.9" stroke="#0c1c30" stroke-width="1.9" />
<line x1="731.1" y1="708.8" x2="731.2" y2="725.9" stroke="#0c1c30" stroke-width="1.3" />
<polygon points="732.2,709.2 744.1,721.1 732.2,726.2" fill="#a4f4c0" stroke="#0c1c30" stroke-width="1.1" stroke-linejoin="round" />
<polygon points="992.5,667.0 1000.0,667.0 998.4,808.0 990.6,806.4" fill="#0000f4" stroke="#00106a" stroke-width="1.2" stroke-linejoin="round" />
<polygon points="1002.0,666.0 1016.2,667.0 1012.6,809.3 1006.0,811.8 998.6,808.5" fill="#62aeea" stroke="#001648" stroke-width="1.1" stroke-linejoin="round" />
<line x1="1006.5" y1="667.0" x2="1003.5" y2="810.0" stroke="#00184a" stroke-width="1.2" />
<line x1="1010.5" y1="667.0" x2="1008.0" y2="811.0" stroke="#00184a" stroke-width="1.2" />
<line x1="1004.0" y1="667.0" x2="1010.0" y2="811.0" stroke="#2060a0" stroke-width="0.9" />
<polygon points="990.6,806.4 1006.0,811.4 1063.0,785.0 1056.0,781.6" fill="#0000e8" stroke="#00106a" stroke-width="1" stroke-linejoin="round" />
<polygon points="1008.2,640.7 1035.5,630.3 1039.1,628.3 1062.1,647.6 1018.6,666.5" fill="#92f0d6" stroke="#0a1a20" stroke-width="1.3" stroke-linejoin="round" />
<polygon points="1008.2,640.7 1035.5,630.3 1018.6,666.5" fill="#c2f8a2" stroke="#0a1a20" stroke-width="1.5" stroke-linejoin="round" />
<polygon points="1002.9,641.5 992.5,665.7 1002.5,667.7" fill="#e8e888" stroke="#0a1a20" stroke-width="1.5" stroke-linejoin="round" />
<polygon points="1004.1,641.9 1002.5,667.7 1010.2,668.1 1006.5,642.3" fill="#f0a050" stroke="#0a1a20" stroke-width="1.5" stroke-linejoin="round" />
<polygon points="1008.2,641.5 1010.2,668.1 1017.8,666.9" fill="#f0a050" stroke="#0a1a20" stroke-width="1.5" stroke-linejoin="round" />
<line x1="1039.1" y1="628.3" x2="1062.9" y2="647.2" stroke="#c07040" stroke-width="2.8" />
<line x1="1038.2" y1="629.6" x2="1061.6" y2="648.4" stroke="#0a1a20" stroke-width="1.2" />
<line x1="1018.6" y1="666.9" x2="1027.5" y2="700.0" stroke="#00106a" stroke-width="1.4" />
<rect x="845" y="659.5" width="4" height="3.4" fill="#0a1a98" stroke="#00106a" stroke-width="0.7"/>
<rect x="983" y="625.5" width="4" height="3.4" fill="#0a1a98" stroke="#00106a" stroke-width="0.7"/>
<rect x="1006.5" y="617" width="4" height="3.4" fill="#0a1a98" stroke="#00106a" stroke-width="0.7"/>
<rect x="1056" y="598.5" width="4" height="3.4" fill="#0a1a98" stroke="#00106a" stroke-width="0.7"/>
<path d="M891.9 588.0 L932.4 588.0 L930.6 851.0 Q911.4 863.5 892.2 856.0 Z" fill="url(#shaft)" stroke="#001648" stroke-width="1.2"/>
<line x1="895.6" y1="588.0" x2="895.7" y2="857.2" stroke="#00143c" stroke-width="1.25" />
<line x1="899.3" y1="588.0" x2="899.2" y2="858.1" stroke="#00143c" stroke-width="1.25" />
<line x1="902.9" y1="588.0" x2="902.7" y2="858.6" stroke="#00143c" stroke-width="1.25" />
<line x1="906.6" y1="588.0" x2="906.2" y2="858.8" stroke="#00143c" stroke-width="1.25" />
<line x1="910.3" y1="588.0" x2="909.7" y2="858.7" stroke="#00143c" stroke-width="1.25" />
<line x1="914.0" y1="588.0" x2="913.1" y2="858.2" stroke="#00143c" stroke-width="1.25" />
<line x1="917.7" y1="588.0" x2="916.6" y2="857.4" stroke="#00143c" stroke-width="1.25" />
<line x1="921.4" y1="588.0" x2="920.1" y2="856.3" stroke="#00143c" stroke-width="1.25" />
<line x1="925.0" y1="588.0" x2="923.6" y2="854.9" stroke="#00143c" stroke-width="1.25" />
<line x1="928.7" y1="588.0" x2="927.1" y2="853.1" stroke="#00143c" stroke-width="1.25" />
<path d="M880.5 569.7 Q909.8 563.0 939.1 569.7 L939.1 572.6 Q909.8 579.1 880.5 572.6 Z" fill="#0c2c58" stroke="#06183a" stroke-width="1.1"/>
<path d="M881.0 572.6 Q909.8 579.4 938.6 572.6 L934.3 584.0 Q909.8 588.7 885.3 584.0 Z" fill="url(#balc)" stroke="#06183a" stroke-width="1.2"/>
<path d="M885.3 584.0 Q909.8 588.7 934.3 584.0 L929.1 589.0 Q909.8 593.3 890.5 589.0 Z" fill="url(#balc2)" stroke="#06183a" stroke-width="1.1"/>
<line x1="881.3" y1="572.6" x2="888.2" y2="584.6" stroke="#06203f" stroke-width="1.45" />
<line x1="888.2" y1="584.6" x2="888.0" y2="574.0" stroke="#06203f" stroke-width="1.45" />
<line x1="888.0" y1="574.0" x2="894.0" y2="585.4" stroke="#06203f" stroke-width="1.45" />
<line x1="894.0" y1="585.4" x2="894.7" y2="575.0" stroke="#06203f" stroke-width="1.45" />
<line x1="894.7" y1="575.0" x2="899.7" y2="586.0" stroke="#06203f" stroke-width="1.45" />
<line x1="899.7" y1="586.0" x2="901.4" y2="575.7" stroke="#06203f" stroke-width="1.45" />
<line x1="901.4" y1="575.7" x2="905.5" y2="586.3" stroke="#06203f" stroke-width="1.45" />
<line x1="905.5" y1="586.3" x2="908.1" y2="576.0" stroke="#06203f" stroke-width="1.45" />
<line x1="908.1" y1="576.0" x2="911.2" y2="586.4" stroke="#06203f" stroke-width="1.45" />
<line x1="911.2" y1="586.4" x2="914.8" y2="575.9" stroke="#06203f" stroke-width="1.45" />
<line x1="914.8" y1="575.9" x2="917.0" y2="586.2" stroke="#06203f" stroke-width="1.45" />
<line x1="917.0" y1="586.2" x2="921.5" y2="575.4" stroke="#06203f" stroke-width="1.45" />
<line x1="921.5" y1="575.4" x2="922.8" y2="585.7" stroke="#06203f" stroke-width="1.45" />
<line x1="922.8" y1="585.7" x2="928.2" y2="574.6" stroke="#06203f" stroke-width="1.45" />
<line x1="928.2" y1="574.6" x2="928.5" y2="585.0" stroke="#06203f" stroke-width="1.45" />
<line x1="928.5" y1="585.0" x2="934.9" y2="573.3" stroke="#06203f" stroke-width="1.45" />
<line x1="934.9" y1="573.3" x2="934.3" y2="584.0" stroke="#06203f" stroke-width="1.45" />
<line x1="886.3" y1="584.5" x2="891.9" y2="589.3" stroke="#06203f" stroke-width="0.9" />
<line x1="891.9" y1="589.3" x2="889.9" y2="585.1" stroke="#06203f" stroke-width="0.9" />
<line x1="889.9" y1="585.1" x2="894.9" y2="589.9" stroke="#06203f" stroke-width="0.9" />
<line x1="894.9" y1="589.9" x2="893.6" y2="585.7" stroke="#06203f" stroke-width="0.9" />
<line x1="893.6" y1="585.7" x2="897.9" y2="590.3" stroke="#06203f" stroke-width="0.9" />
<line x1="897.9" y1="590.3" x2="897.2" y2="586.1" stroke="#06203f" stroke-width="0.9" />
<line x1="897.2" y1="586.1" x2="900.9" y2="590.7" stroke="#06203f" stroke-width="0.9" />
<line x1="900.9" y1="590.7" x2="900.8" y2="586.4" stroke="#06203f" stroke-width="0.9" />
<line x1="900.8" y1="586.4" x2="903.8" y2="590.9" stroke="#06203f" stroke-width="0.9" />
<line x1="903.8" y1="590.9" x2="904.4" y2="586.6" stroke="#06203f" stroke-width="0.9" />
<line x1="904.4" y1="586.6" x2="906.8" y2="591.1" stroke="#06203f" stroke-width="0.9" />
<line x1="906.8" y1="591.1" x2="908.0" y2="586.8" stroke="#06203f" stroke-width="0.9" />
<line x1="908.0" y1="586.8" x2="909.8" y2="591.1" stroke="#06203f" stroke-width="0.9" />
<line x1="909.8" y1="591.1" x2="911.6" y2="586.8" stroke="#06203f" stroke-width="0.9" />
<line x1="911.6" y1="586.8" x2="912.8" y2="591.1" stroke="#06203f" stroke-width="0.9" />
<line x1="912.8" y1="591.1" x2="915.2" y2="586.6" stroke="#06203f" stroke-width="0.9" />
<line x1="915.2" y1="586.6" x2="915.8" y2="590.9" stroke="#06203f" stroke-width="0.9" />
<line x1="915.8" y1="590.9" x2="918.8" y2="586.4" stroke="#06203f" stroke-width="0.9" />
<line x1="918.8" y1="586.4" x2="918.7" y2="590.7" stroke="#06203f" stroke-width="0.9" />
<line x1="918.7" y1="590.7" x2="922.4" y2="586.1" stroke="#06203f" stroke-width="0.9" />
<line x1="922.4" y1="586.1" x2="921.7" y2="590.3" stroke="#06203f" stroke-width="0.9" />
<line x1="921.7" y1="590.3" x2="926.0" y2="585.7" stroke="#06203f" stroke-width="0.9" />
<line x1="926.0" y1="585.7" x2="924.7" y2="589.9" stroke="#06203f" stroke-width="0.9" />
<line x1="924.7" y1="589.9" x2="929.7" y2="585.1" stroke="#06203f" stroke-width="0.9" />
<line x1="929.7" y1="585.1" x2="927.7" y2="589.3" stroke="#06203f" stroke-width="0.9" />
<line x1="927.7" y1="589.3" x2="933.3" y2="584.5" stroke="#06203f" stroke-width="0.9" />
<polygon points="888.4,517.0 932.4,517.0 931.2,573.5 889.6,573.5" fill="url(#shaft)" stroke="#001648" stroke-width="1.2" stroke-linejoin="round" />
<line x1="892.1" y1="517.0" x2="893.1" y2="573.5" stroke="#00143c" stroke-width="1.25" />
<line x1="895.7" y1="517.0" x2="896.5" y2="573.5" stroke="#00143c" stroke-width="1.25" />
<line x1="899.4" y1="517.0" x2="900.0" y2="573.5" stroke="#00143c" stroke-width="1.25" />
<line x1="903.1" y1="517.0" x2="903.5" y2="573.5" stroke="#00143c" stroke-width="1.25" />
<line x1="906.7" y1="517.0" x2="906.9" y2="573.5" stroke="#00143c" stroke-width="1.25" />
<line x1="910.4" y1="517.0" x2="910.4" y2="573.5" stroke="#00143c" stroke-width="1.25" />
<line x1="914.1" y1="517.0" x2="913.9" y2="573.5" stroke="#00143c" stroke-width="1.25" />
<line x1="917.7" y1="517.0" x2="917.3" y2="573.5" stroke="#00143c" stroke-width="1.25" />
<line x1="921.4" y1="517.0" x2="920.8" y2="573.5" stroke="#00143c" stroke-width="1.25" />
<line x1="925.1" y1="517.0" x2="924.3" y2="573.5" stroke="#00143c" stroke-width="1.25" />
<line x1="928.7" y1="517.0" x2="927.7" y2="573.5" stroke="#00143c" stroke-width="1.25" />
<line x1="888.4" y1="517.0" x2="893.1" y2="573.5" stroke="#00143c" stroke-width="1.0" />
<line x1="892.1" y1="517.0" x2="889.6" y2="573.5" stroke="#0a2a6a" stroke-width="0.8" />
<line x1="892.1" y1="517.0" x2="896.5" y2="573.5" stroke="#00143c" stroke-width="1.0" />
<line x1="895.7" y1="517.0" x2="900.0" y2="573.5" stroke="#00143c" stroke-width="1.0" />
<line x1="899.4" y1="517.0" x2="896.5" y2="573.5" stroke="#0a2a6a" stroke-width="0.8" />
<line x1="899.4" y1="517.0" x2="903.5" y2="573.5" stroke="#00143c" stroke-width="1.0" />
<line x1="903.1" y1="517.0" x2="906.9" y2="573.5" stroke="#00143c" stroke-width="1.0" />
<line x1="906.7" y1="517.0" x2="903.5" y2="573.5" stroke="#0a2a6a" stroke-width="0.8" />
<line x1="906.7" y1="517.0" x2="910.4" y2="573.5" stroke="#00143c" stroke-width="1.0" />
<line x1="910.4" y1="517.0" x2="913.9" y2="573.5" stroke="#00143c" stroke-width="1.0" />
<line x1="914.1" y1="517.0" x2="910.4" y2="573.5" stroke="#0a2a6a" stroke-width="0.8" />
<line x1="914.1" y1="517.0" x2="917.3" y2="573.5" stroke="#00143c" stroke-width="1.0" />
<line x1="917.7" y1="517.0" x2="920.8" y2="573.5" stroke="#00143c" stroke-width="1.0" />
<line x1="921.4" y1="517.0" x2="917.3" y2="573.5" stroke="#0a2a6a" stroke-width="0.8" />
<line x1="921.4" y1="517.0" x2="924.3" y2="573.5" stroke="#00143c" stroke-width="1.0" />
<line x1="925.1" y1="517.0" x2="927.7" y2="573.5" stroke="#00143c" stroke-width="1.0" />
<line x1="928.7" y1="517.0" x2="924.3" y2="573.5" stroke="#0a2a6a" stroke-width="0.8" />
<line x1="928.7" y1="517.0" x2="931.2" y2="573.5" stroke="#00143c" stroke-width="1.0" />
<line x1="910.4" y1="419.2" x2="910.7" y2="449.0" stroke="#0a2038" stroke-width="1.8" />
<ellipse cx="910.5" cy="429.0" rx="1.6" ry="2.7" fill="#0a2038"/>
<line x1="910.6" y1="437.1" x2="910.7" y2="449.0" stroke="#0a2038" stroke-width="2.6" />
<polygon points="910.7,448.5 929.5,505.0 890.5,505.0" fill="url(#cone)" stroke="#001648" stroke-width="1.2" stroke-linejoin="round" />
<line x1="910.7" y1="448.5" x2="894.0" y2="505.0" stroke="#0a1c38" stroke-width="1.15" />
<line x1="910.7" y1="448.5" x2="897.6" y2="505.0" stroke="#0a1c38" stroke-width="1.15" />
<line x1="910.7" y1="448.5" x2="901.1" y2="505.0" stroke="#0a1c38" stroke-width="1.15" />
<line x1="910.7" y1="448.5" x2="904.7" y2="505.0" stroke="#0a1c38" stroke-width="1.15" />
<line x1="910.7" y1="448.5" x2="908.2" y2="505.0" stroke="#0a1c38" stroke-width="1.15" />
<line x1="910.7" y1="448.5" x2="911.8" y2="505.0" stroke="#0a1c38" stroke-width="1.15" />
<line x1="910.7" y1="448.5" x2="915.3" y2="505.0" stroke="#0a1c38" stroke-width="1.15" />
<line x1="910.7" y1="448.5" x2="918.9" y2="505.0" stroke="#0a1c38" stroke-width="1.15" />
<line x1="910.7" y1="448.5" x2="922.4" y2="505.0" stroke="#0a1c38" stroke-width="1.15" />
<line x1="910.7" y1="448.5" x2="926.0" y2="505.0" stroke="#0a1c38" stroke-width="1.15" />
<polygon points="887.0,496.4 934.3,496.4 932.9,519.4 888.2,519.4" fill="url(#crown)" stroke="#06183a" stroke-width="1.1" stroke-linejoin="round" />
<polygon points="896.8,496.1 922.2,496.1 920.4,504.4 898.5,504.4" fill="#e45c2c" stroke="none" stroke-width="0" stroke-linejoin="round" />
<line x1="897.9" y1="496.1" x2="896.6" y2="504.4" stroke="#0a1c38" stroke-width="1.1" />
<line x1="900.8" y1="496.1" x2="899.8" y2="504.4" stroke="#0a1c38" stroke-width="1.1" />
<line x1="903.7" y1="496.1" x2="903.0" y2="504.4" stroke="#0a1c38" stroke-width="1.1" />
<line x1="906.6" y1="496.1" x2="906.2" y2="504.4" stroke="#0a1c38" stroke-width="1.1" />
<line x1="909.5" y1="496.1" x2="909.5" y2="504.4" stroke="#0a1c38" stroke-width="1.1" />
<line x1="912.4" y1="496.1" x2="912.7" y2="504.4" stroke="#0a1c38" stroke-width="1.1" />
<line x1="915.2" y1="496.1" x2="915.9" y2="504.4" stroke="#0a1c38" stroke-width="1.1" />
<line x1="918.1" y1="496.1" x2="919.2" y2="504.4" stroke="#0a1c38" stroke-width="1.1" />
<line x1="921.0" y1="496.1" x2="922.4" y2="504.4" stroke="#0a1c38" stroke-width="1.1" />
<path d="M885.5 509.6 L885.5 495.5 Q888.8 489.9 892.2 495.5 L892.2 509.6 Z" fill="#0b2a52" stroke="#06183a" stroke-width="1"/>
<path d="M887.2 508.6 Q888.8 494.5 890.5 508.6" fill="none" stroke="#2a6a98" stroke-width="0.9"/>
<path d="M928.3 509.6 L928.3 495.5 Q931.9 489.9 935.6 495.5 L935.6 509.6 Z" fill="#0b2a52" stroke="#06183a" stroke-width="1"/>
<path d="M930.3 508.6 Q931.9 494.5 933.6 508.6" fill="none" stroke="#2a6a98" stroke-width="0.9"/>
<path d="M891.6 497.8 Q894.5 493.8 898.5 498.9 L901.5 502.4 Q908.3 495.5 915.4 503.3 L918.6 498.9 Q922.5 493.8 926.4 497.5 L927.9 513.1 L890.7 513.1 Z" fill="url(#petal)" stroke="#06183a" stroke-width="1.1"/>
<line x1="894.2" y1="502.3" x2="894.9" y2="513.1" stroke="#0a2a58" stroke-width="0.9" />
<line x1="896.7" y1="497.8" x2="896.0" y2="513.1" stroke="#0a2a58" stroke-width="0.9" />
<line x1="899.3" y1="498.0" x2="900.0" y2="513.1" stroke="#0a2a58" stroke-width="0.9" />
<line x1="901.8" y1="502.4" x2="901.1" y2="513.1" stroke="#0a2a58" stroke-width="0.9" />
<line x1="904.4" y1="499.4" x2="905.1" y2="513.1" stroke="#0a2a58" stroke-width="0.9" />
<line x1="906.9" y1="497.0" x2="906.2" y2="513.1" stroke="#0a2a58" stroke-width="0.9" />
<line x1="909.5" y1="501.5" x2="910.2" y2="513.1" stroke="#0a2a58" stroke-width="0.9" />
<line x1="912.0" y1="501.0" x2="911.3" y2="513.1" stroke="#0a2a58" stroke-width="0.9" />
<line x1="914.6" y1="496.8" x2="915.3" y2="513.1" stroke="#0a2a58" stroke-width="0.9" />
<line x1="917.1" y1="500.0" x2="916.4" y2="513.1" stroke="#0a2a58" stroke-width="0.9" />
<line x1="919.7" y1="502.2" x2="920.4" y2="513.1" stroke="#0a2a58" stroke-width="0.9" />
<line x1="922.2" y1="497.5" x2="921.5" y2="513.1" stroke="#0a2a58" stroke-width="0.9" />
<line x1="924.8" y1="498.4" x2="925.5" y2="513.1" stroke="#0a2a58" stroke-width="0.9" />
<line x1="888.2" y1="513.1" x2="932.9" y2="513.1" stroke="#06183a" stroke-width="1.2" />
<line x1="889.9" y1="513.7" x2="890.8" y2="518.5" stroke="#2a6c98" stroke-width="0.8" />
<line x1="892.6" y1="513.7" x2="893.6" y2="518.5" stroke="#2a6c98" stroke-width="0.8" />
<line x1="895.4" y1="513.7" x2="896.3" y2="518.5" stroke="#2a6c98" stroke-width="0.8" />
<line x1="898.2" y1="513.7" x2="899.1" y2="518.5" stroke="#2a6c98" stroke-width="0.8" />
<line x1="900.9" y1="513.7" x2="901.9" y2="518.5" stroke="#2a6c98" stroke-width="0.8" />
<line x1="903.7" y1="513.7" x2="904.6" y2="518.5" stroke="#2a6c98" stroke-width="0.8" />
<line x1="906.5" y1="513.7" x2="907.4" y2="518.5" stroke="#2a6c98" stroke-width="0.8" />
<line x1="909.2" y1="513.7" x2="910.2" y2="518.5" stroke="#2a6c98" stroke-width="0.8" />
<line x1="912.0" y1="513.7" x2="912.9" y2="518.5" stroke="#2a6c98" stroke-width="0.8" />
<line x1="914.8" y1="513.7" x2="915.7" y2="518.5" stroke="#2a6c98" stroke-width="0.8" />
<line x1="917.5" y1="513.7" x2="918.5" y2="518.5" stroke="#2a6c98" stroke-width="0.8" />
<line x1="920.3" y1="513.7" x2="921.2" y2="518.5" stroke="#2a6c98" stroke-width="0.8" />
<line x1="923.1" y1="513.7" x2="924.0" y2="518.5" stroke="#2a6c98" stroke-width="0.8" />
<line x1="925.8" y1="513.7" x2="926.8" y2="518.5" stroke="#2a6c98" stroke-width="0.8" />
<line x1="928.6" y1="513.7" x2="929.5" y2="518.5" stroke="#2a6c98" stroke-width="0.8" />
<line x1="931.4" y1="513.7" x2="932.3" y2="518.5" stroke="#2a6c98" stroke-width="0.8" />
<rect x="928.2" y="518" width="3.8" height="4.6" fill="#f6b820"/>
<line x1="573.3" y1="251.7" x2="780.7" y2="246.5" stroke="#d21ed2" stroke-width="1.9" />
<line x1="780.7" y1="246.5" x2="1173.7" y2="256.3" stroke="#d21ed2" stroke-width="1.9" />
<line x1="573.3" y1="251.7" x2="985.6" y2="259.8" stroke="#d21ed2" stroke-width="1.9" />
<line x1="985.6" y1="259.8" x2="1173.7" y2="256.3" stroke="#d21ed2" stroke-width="1.9" />
<line x1="573.3" y1="251.7" x2="625.2" y2="947.2" stroke="#d21ed2" stroke-width="1.9" />
<line x1="1173.7" y1="256.3" x2="1142.6" y2="819.5" stroke="#d21ed2" stroke-width="1.9" />
<line x1="780.7" y1="246.5" x2="804.2" y2="1054.6" stroke="#d21ed2" stroke-width="1.9" />
<line x1="625.2" y1="947.2" x2="804.2" y2="1054.6" stroke="#d21ed2" stroke-width="1.9" />
<line x1="1142.6" y1="819.5" x2="804.2" y2="1054.6" stroke="#d21ed2" stroke-width="1.9" />
</g>
<circle cx="1444.6" cy="188.8" r="6.8" fill="#e0889c" opacity="0.6"/>
<circle cx="1487" cy="188" r="6.8" fill="#5f8fc4" opacity="0.62"/>
<circle cx="1467.3" cy="223.3" r="6.8" fill="#a9cc66" opacity="0.62"/>
<line x1="1467.8" y1="194.3" x2="1467.4" y2="166.0" stroke="#7fb800" stroke-width="1.6" />
<line x1="1467.8" y1="194.3" x2="1448.0" y2="200.3" stroke="#2a7fe0" stroke-width="1.4" />
<line x1="1467.8" y1="194.3" x2="1490.5" y2="199.9" stroke="#e0284c" stroke-width="1.4" />
<circle cx="1467.3" cy="165.8" r="7.6" fill="#7fb800"/>
<circle cx="1447.9" cy="200.3" r="7.2" fill="#2a88ec"/>
<circle cx="1490.5" cy="199.9" r="7.2" fill="#e02c50"/>
<path d="M1464.2 161.6 L1467.3 166 L1470.4 161.6 M1467.3 166 V170.3" stroke="#fff" stroke-width="1.3" fill="none"/>
<path d="M1445 196.6 H1450.8 L1445 204 H1450.8" stroke="#fff" stroke-width="1.3" fill="none"/>
<path d="M1487.6 196.2 L1493.4 203.6 M1493.4 196.2 L1487.6 203.6" stroke="#fff" stroke-width="1.3" fill="none"/>
<rect x="308.5" y="149.5" width="1204" height="878" fill="none" stroke="#0b6fc4" stroke-width="3"/>
</svg>
<span class="t" style="left:5.30px;top:5px;font-size:11px;line-height:12px;color:#000;letter-spacing:-0.431px;">File</span>
<span class="t" style="left:36.70px;top:5px;font-size:11px;line-height:12px;color:#000;letter-spacing:-0.281px;">Help</span>
<div class="r" style="left:0px;top:20px;width:1916px;height:49px;background:#333333;"></div>
<svg class="r" style="left:20px;top:31px" width="26" height="28" viewBox="0 0 26 28"><polygon points="1.4,13.8 23,2.6 23,25" fill="#999999"/></svg>
<svg class="r" style="left:59px;top:31px" width="26" height="28" viewBox="0 0 26 28"><polygon points="23.5,13.9 2,3.1 2,24.7" fill="#4a4a4a"/></svg>
<span class="t" style="left:136.00px;top:34px;font-size:14px;line-height:16px;color:#707070;font-weight:700;letter-spacing:0.075px;">START</span>
<span class="t" style="left:219.00px;top:34px;font-size:14px;line-height:16px;color:#707070;font-weight:700;letter-spacing:0.474px;">OVERVIEW</span>
<span class="t" style="left:343.00px;top:34px;font-size:14px;line-height:16px;color:#707070;font-weight:700;letter-spacing:-0.138px;">TLAS</span>
<span class="t" style="left:431.00px;top:34px;font-size:14px;line-height:16px;color:#ffffff;font-weight:700;letter-spacing:-0.278px;">BLAS</span>
<span class="t" style="left:520.00px;top:34px;font-size:14px;line-height:16px;color:#707070;font-weight:700;letter-spacing:0.241px;">RAY</span>
<span class="t" style="left:1827.00px;top:34px;font-size:14px;line-height:16px;color:#707070;font-weight:700;letter-spacing:0.374px;">SETTINGS</span>
<div class="r" style="left:405px;top:64px;width:89px;height:4px;background:#e0223c;"></div>
<div class="r" style="left:95px;top:69px;width:118px;height:44px;background:#ececec;box-sizing:border-box;border:1px solid #c6c6c6;border-top:none;"></div>
<div class="r" style="left:213px;top:69px;width:111px;height:44px;background:#ececec;box-sizing:border-box;border:1px solid #c6c6c6;border-top:none;border-left:none;"></div>
<div class="r" style="left:324px;top:69px;width:126px;height:44px;background:#ececec;box-sizing:border-box;border:1px solid #c6c6c6;border-top:none;border-left:none;"></div>
<div class="r" style="left:450px;top:69px;width:120px;height:44px;background:#ececec;box-sizing:border-box;border:1px solid #c6c6c6;border-top:none;border-left:none;"></div>
<span class="t" style="left:24.00px;top:84px;font-size:13px;line-height:15px;color:#111;font-weight:700;letter-spacing:0.554px;">Viewer</span>
<span class="t" style="left:122.00px;top:84px;font-size:13px;line-height:15px;color:#111;font-weight:700;letter-spacing:0.448px;">Instances</span>
<span class="t" style="left:239.00px;top:84px;font-size:13px;line-height:15px;color:#111;font-weight:700;letter-spacing:0.103px;">Triangles</span>
<span class="t" style="left:350.00px;top:84px;font-size:13px;line-height:15px;color:#111;font-weight:700;letter-spacing:0.147px;">Geometries</span>
<span class="t" style="left:476.00px;top:84px;font-size:13px;line-height:15px;color:#111;font-weight:700;letter-spacing:0.370px;">Properties</span>
<span class="t" style="left:7.00px;top:130px;font-size:12px;line-height:14px;color:#000;letter-spacing:-0.404px;">BLAS:</span>
<svg class="r" style="left:44.3px;top:129px" width="19.5" height="16.5" viewBox="0 0 19.5 16.5"><path d="M3.6 4.2 L9.75 10.9 L15.9 4.2" fill="none" stroke="#969696" stroke-width="2.9" stroke-linecap="butt" stroke-linejoin="miter"/></svg>
<span class="t" style="left:67.00px;top:129px;font-size:12px;line-height:14px;color:#000;letter-spacing:0.297px;">0x300ed5700</span>
<div class="r" style="left:153px;top:122px;width:1px;height:28px;background:#c8c8c8;"></div>
<span class="t" style="left:168.00px;top:130px;font-size:12px;line-height:14px;color:#000;letter-spacing:0.331px;">Collapse tree</span>
<div class="r" style="left:7px;top:156px;width:134px;height:20px;background:#fff;box-sizing:border-box;border:1px solid #7a7a7a;"></div>
<span class="t" style="left:10.00px;top:160px;font-size:12px;line-height:14px;color:#8a8a8a;letter-spacing:0.442px;">Search...</span>
<svg class="r" style="left:114px;top:156px" width="24" height="20" viewBox="0 0 24 20"><circle cx="14" cy="8.4" r="5" fill="none" stroke="#555" stroke-width="1.3"/><path d="M10.4 12.3 L4.6 17.2" stroke="#555" stroke-width="2.2" fill="none"/></svg>
<div class="r" style="left:0;top:181px;width:286px;height:422px;overflow:hidden">
<svg class="r" style="left:101px;top:2px" width="13" height="13" viewBox="0 0 13 13"><rect x="0.5" y="0.5" width="12" height="12" fill="#fff" stroke="#333" stroke-width="1"/><path d="M2.6 6.6 L5.3 9.4 L10.6 3.2" fill="none" stroke="#4a4a4a" stroke-width="1.25"/></svg>
<span class="t" style="left:117.60px;top:2px;font-size:12px;line-height:14px;color:#111;letter-spacing:0.111px;">Triangle - 0x1cd700</span>
<svg class="r" style="left:101px;top:18px" width="13" height="13" viewBox="0 0 13 13"><rect x="0.5" y="0.5" width="12" height="12" fill="#fff" stroke="#333" stroke-width="1"/><path d="M2.6 6.6 L5.3 9.4 L10.6 3.2" fill="none" stroke="#4a4a4a" stroke-width="1.25"/></svg>
<span class="t" style="left:117.60px;top:18px;font-size:12px;line-height:14px;color:#111;letter-spacing:0.110px;">Triangle - 0x1cd6c0</span>
<svg class="r" style="left:101px;top:34px" width="13" height="13" viewBox="0 0 13 13"><rect x="0.5" y="0.5" width="12" height="12" fill="#fff" stroke="#333" stroke-width="1"/><path d="M2.6 6.6 L5.3 9.4 L10.6 3.2" fill="none" stroke="#4a4a4a" stroke-width="1.25"/></svg>
<span class="t" style="left:117.60px;top:34px;font-size:12px;line-height:14px;color:#111;letter-spacing:0.111px;">Triangle - 0x1cd740</span>
<svg class="r" style="left:81px;top:50px" width="13" height="13" viewBox="0 0 13 13"><rect x="0.5" y="0.5" width="12" height="12" fill="#fff" stroke="#333" stroke-width="1"/><path d="M2.6 6.6 L5.3 9.4 L10.6 3.2" fill="none" stroke="#4a4a4a" stroke-width="1.25"/></svg>
<svg class="r" style="left:66px;top:53px" width="10" height="7" viewBox="0 0 10 7"><path d="M0.8 0.8 L5 5.2 L9.2 0.8" fill="none" stroke="#333" stroke-width="1.5"/></svg>
<span class="t" style="left:97.60px;top:50px;font-size:12px;line-height:14px;color:#111;letter-spacing:0.121px;">Box32 - 0x20280</span>
<svg class="r" style="left:91px;top:66px" width="13" height="13" viewBox="0 0 13 13"><rect x="0.5" y="0.5" width="12" height="12" fill="#fff" stroke="#333" stroke-width="1"/><path d="M2.6 6.6 L5.3 9.4 L10.6 3.2" fill="none" stroke="#4a4a4a" stroke-width="1.25"/></svg>
<svg class="r" style="left:76px;top:69px" width="10" height="7" viewBox="0 0 10 7"><path d="M0.8 0.8 L5 5.2 L9.2 0.8" fill="none" stroke="#333" stroke-width="1.5"/></svg>
<span class="t" style="left:107.60px;top:66px;font-size:12px;line-height:14px;color:#111;letter-spacing:0.121px;">Box32 - 0x37480</span>
<svg class="r" style="left:101px;top:82px" width="13" height="13" viewBox="0 0 13 13"><rect x="0.5" y="0.5" width="12" height="12" fill="#fff" stroke="#333" stroke-width="1"/><path d="M2.6 6.6 L5.3 9.4 L10.6 3.2" fill="none" stroke="#4a4a4a" stroke-width="1.25"/></svg>
<span class="t" style="left:117.60px;top:82px;font-size:12px;line-height:14px;color:#111;letter-spacing:0.111px;">Triangle - 0x1cd840</span>
<svg class="r" style="left:101px;top:98px" width="13" height="13" viewBox="0 0 13 13"><rect x="0.5" y="0.5" width="12" height="12" fill="#fff" stroke="#333" stroke-width="1"/><path d="M2.6 6.6 L5.3 9.4 L10.6 3.2" fill="none" stroke="#4a4a4a" stroke-width="1.25"/></svg>
<span class="t" style="left:117.60px;top:98px;font-size:12px;line-height:14px;color:#111;letter-spacing:0.110px;">Triangle - 0x1cd7c0</span>
<svg class="r" style="left:101px;top:114px" width="13" height="13" viewBox="0 0 13 13"><rect x="0.5" y="0.5" width="12" height="12" fill="#fff" stroke="#333" stroke-width="1"/><path d="M2.6 6.6 L5.3 9.4 L10.6 3.2" fill="none" stroke="#4a4a4a" stroke-width="1.25"/></svg>
<span class="t" style="left:117.60px;top:114px;font-size:12px;line-height:14px;color:#111;letter-spacing:0.111px;">Triangle - 0x1cd800</span>
<svg class="r" style="left:101px;top:130px" width="13" height="13" viewBox="0 0 13 13"><rect x="0.5" y="0.5" width="12" height="12" fill="#fff" stroke="#333" stroke-width="1"/><path d="M2.6 6.6 L5.3 9.4 L10.6 3.2" fill="none" stroke="#4a4a4a" stroke-width="1.25"/></svg>
<span class="t" style="left:117.60px;top:130px;font-size:12px;line-height:14px;color:#111;letter-spacing:0.111px;">Triangle - 0x1cd780</span>
<svg class="r" style="left:91px;top:146px" width="13" height="13" viewBox="0 0 13 13"><rect x="0.5" y="0.5" width="12" height="12" fill="#fff" stroke="#333" stroke-width="1"/><path d="M2.6 6.6 L5.3 9.4 L10.6 3.2" fill="none" stroke="#4a4a4a" stroke-width="1.25"/></svg>
<svg class="r" style="left:76px;top:149px" width="10" height="7" viewBox="0 0 10 7"><path d="M0.8 0.8 L5 5.2 L9.2 0.8" fill="none" stroke="#333" stroke-width="1.5"/></svg>
<span class="t" style="left:107.60px;top:146px;font-size:12px;line-height:14px;color:#111;letter-spacing:0.121px;">Box32 - 0x37500</span>
<svg class="r" style="left:101px;top:162px" width="13" height="13" viewBox="0 0 13 13"><rect x="0.5" y="0.5" width="12" height="12" fill="#fff" stroke="#333" stroke-width="1"/><path d="M2.6 6.6 L5.3 9.4 L10.6 3.2" fill="none" stroke="#4a4a4a" stroke-width="1.25"/></svg>
<svg class="r" style="left:86px;top:165px" width="10" height="7" viewBox="0 0 10 7"><path d="M0.8 0.8 L5 5.2 L9.2 0.8" fill="none" stroke="#333" stroke-width="1.5"/></svg>
<span class="t" style="left:117.60px;top:162px;font-size:12px;line-height:14px;color:#111;letter-spacing:0.117px;">Box32 - 0xf0780</span>
<svg class="r" style="left:111px;top:178px" width="13" height="13" viewBox="0 0 13 13"><rect x="0.5" y="0.5" width="12" height="12" fill="#fff" stroke="#333" stroke-width="1"/><path d="M2.6 6.6 L5.3 9.4 L10.6 3.2" fill="none" stroke="#4a4a4a" stroke-width="1.25"/></svg>
<svg class="r" style="left:96px;top:181px" width="10" height="7" viewBox="0 0 10 7"><path d="M0.8 0.8 L5 5.2 L9.2 0.8" fill="none" stroke="#333" stroke-width="1.5"/></svg>
<span class="t" style="left:127.60px;top:178px;font-size:12px;line-height:14px;color:#111;letter-spacing:0.122px;">Box32 - 0x108900</span>
<div class="r" style="left:117px;top:193px;width:161px;height:16px;background:#ededed;"></div>
<svg class="r" style="left:121px;top:194px" width="13" height="13" viewBox="0 0 13 13"><rect x="0.5" y="0.5" width="12" height="12" fill="#fff" stroke="#333" stroke-width="1"/><path d="M2.6 6.6 L5.3 9.4 L10.6 3.2" fill="none" stroke="#4a4a4a" stroke-width="1.25"/></svg>
<span class="t" style="left:137.60px;top:194px;font-size:12px;line-height:14px;color:#111;letter-spacing:0.111px;">Triangle - 0x1c9640</span>
<svg class="r" style="left:121px;top:210px" width="13" height="13" viewBox="0 0 13 13"><rect x="0.5" y="0.5" width="12" height="12" fill="#fff" stroke="#333" stroke-width="1"/><path d="M2.6 6.6 L5.3 9.4 L10.6 3.2" fill="none" stroke="#4a4a4a" stroke-width="1.25"/></svg>
<span class="t" style="left:137.60px;top:210px;font-size:12px;line-height:14px;color:#111;letter-spacing:0.111px;">Triangle - 0x1c9600</span>
<svg class="r" style="left:111px;top:226px" width="13" height="13" viewBox="0 0 13 13"><rect x="0.5" y="0.5" width="12" height="12" fill="#fff" stroke="#333" stroke-width="1"/><path d="M2.6 6.6 L5.3 9.4 L10.6 3.2" fill="none" stroke="#4a4a4a" stroke-width="1.25"/></svg>
<span class="t" style="left:127.60px;top:226px;font-size:12px;line-height:14px;color:#111;letter-spacing:0.111px;">Triangle - 0x1ca500</span>
<svg class="r" style="left:111px;top:242px" width="13" height="13" viewBox="0 0 13 13"><rect x="0.5" y="0.5" width="12" height="12" fill="#fff" stroke="#333" stroke-width="1"/><path d="M2.6 6.6 L5.3 9.4 L10.6 3.2" fill="none" stroke="#4a4a4a" stroke-width="1.25"/></svg>
<span class="t" style="left:127.60px;top:242px;font-size:12px;line-height:14px;color:#111;letter-spacing:0.110px;">Triangle - 0x1c93c0</span>
<svg class="r" style="left:111px;top:258px" width="13" height="13" viewBox="0 0 13 13"><rect x="0.5" y="0.5" width="12" height="12" fill="#fff" stroke="#333" stroke-width="1"/><path d="M2.6 6.6 L5.3 9.4 L10.6 3.2" fill="none" stroke="#4a4a4a" stroke-width="1.25"/></svg>
<span class="t" style="left:127.60px;top:258px;font-size:12px;line-height:14px;color:#111;letter-spacing:0.111px;">Triangle - 0x1c9380</span>
<svg class="r" style="left:101px;top:274px" width="13" height="13" viewBox="0 0 13 13"><rect x="0.5" y="0.5" width="12" height="12" fill="#fff" stroke="#333" stroke-width="1"/><path d="M2.6 6.6 L5.3 9.4 L10.6 3.2" fill="none" stroke="#4a4a4a" stroke-width="1.25"/></svg>
<svg class="r" style="left:86px;top:277px" width="10" height="7" viewBox="0 0 10 7"><path d="M0.8 0.8 L5 5.2 L9.2 0.8" fill="none" stroke="#333" stroke-width="1.5"/></svg>
<span class="t" style="left:117.60px;top:274px;font-size:12px;line-height:14px;color:#111;letter-spacing:0.117px;">Box32 - 0xf0800</span>
<svg class="r" style="left:111px;top:290px" width="13" height="13" viewBox="0 0 13 13"><rect x="0.5" y="0.5" width="12" height="12" fill="#fff" stroke="#333" stroke-width="1"/><path d="M2.6 6.6 L5.3 9.4 L10.6 3.2" fill="none" stroke="#4a4a4a" stroke-width="1.25"/></svg>
<svg class="r" style="left:96px;top:293px" width="10" height="7" viewBox="0 0 10 7"><path d="M0.8 0.8 L5 5.2 L9.2 0.8" fill="none" stroke="#333" stroke-width="1.5"/></svg>
<span class="t" style="left:127.60px;top:290px;font-size:12px;line-height:14px;color:#111;letter-spacing:0.122px;">Box32 - 0x108980</span>
<svg class="r" style="left:121px;top:306px" width="13" height="13" viewBox="0 0 13 13"><rect x="0.5" y="0.5" width="12" height="12" fill="#fff" stroke="#333" stroke-width="1"/><path d="M2.6 6.6 L5.3 9.4 L10.6 3.2" fill="none" stroke="#4a4a4a" stroke-width="1.25"/></svg>
<svg class="r" style="left:106px;top:309px" width="10" height="7" viewBox="0 0 10 7"><path d="M0.8 0.8 L5 5.2 L9.2 0.8" fill="none" stroke="#333" stroke-width="1.5"/></svg>
<span class="t" style="left:137.60px;top:306px;font-size:12px;line-height:14px;color:#111;letter-spacing:0.121px;">Box32 - 0x117b80</span>
<svg class="r" style="left:131px;top:322px" width="13" height="13" viewBox="0 0 13 13"><rect x="0.5" y="0.5" width="12" height="12" fill="#fff" stroke="#333" stroke-width="1"/><path d="M2.6 6.6 L5.3 9.4 L10.6 3.2" fill="none" stroke="#4a4a4a" stroke-width="1.25"/></svg>
<span class="t" style="left:147.60px;top:322px;font-size:12px;line-height:14px;color:#111;letter-spacing:0.111px;">Triangle - 0x1c9300</span>
<svg class="r" style="left:131px;top:338px" width="13" height="13" viewBox="0 0 13 13"><rect x="0.5" y="0.5" width="12" height="12" fill="#fff" stroke="#333" stroke-width="1"/><path d="M2.6 6.6 L5.3 9.4 L10.6 3.2" fill="none" stroke="#4a4a4a" stroke-width="1.25"/></svg>
<span class="t" style="left:147.60px;top:338px;font-size:12px;line-height:14px;color:#111;letter-spacing:0.111px;">Triangle - 0x1c9340</span>
<svg class="r" style="left:121px;top:354px" width="13" height="13" viewBox="0 0 13 13"><rect x="0.5" y="0.5" width="12" height="12" fill="#fff" stroke="#333" stroke-width="1"/><path d="M2.6 6.6 L5.3 9.4 L10.6 3.2" fill="none" stroke="#4a4a4a" stroke-width="1.25"/></svg>
<svg class="r" style="left:106px;top:357px" width="10" height="7" viewBox="0 0 10 7"><path d="M0.8 0.8 L5 5.2 L9.2 0.8" fill="none" stroke="#333" stroke-width="1.5"/></svg>
<span class="t" style="left:137.60px;top:354px;font-size:12px;line-height:14px;color:#111;letter-spacing:0.120px;">Box32 - 0x117c00</span>
<svg class="r" style="left:131px;top:370px" width="13" height="13" viewBox="0 0 13 13"><rect x="0.5" y="0.5" width="12" height="12" fill="#fff" stroke="#333" stroke-width="1"/><path d="M2.6 6.6 L5.3 9.4 L10.6 3.2" fill="none" stroke="#4a4a4a" stroke-width="1.25"/></svg>
<span class="t" style="left:147.60px;top:370px;font-size:12px;line-height:14px;color:#111;letter-spacing:0.110px;">Triangle - 0x1cc940</span>
<svg class="r" style="left:131px;top:386px" width="13" height="13" viewBox="0 0 13 13"><rect x="0.5" y="0.5" width="12" height="12" fill="#fff" stroke="#333" stroke-width="1"/><path d="M2.6 6.6 L5.3 9.4 L10.6 3.2" fill="none" stroke="#4a4a4a" stroke-width="1.25"/></svg>
<span class="t" style="left:147.60px;top:386px;font-size:12px;line-height:14px;color:#111;letter-spacing:0.110px;">Triangle - 0x1cc900</span>
<svg class="r" style="left:121px;top:402px" width="13" height="13" viewBox="0 0 13 13"><rect x="0.5" y="0.5" width="12" height="12" fill="#fff" stroke="#333" stroke-width="1"/><path d="M2.6 6.6 L5.3 9.4 L10.6 3.2" fill="none" stroke="#4a4a4a" stroke-width="1.25"/></svg>
<span class="t" style="left:137.60px;top:402px;font-size:12px;line-height:14px;color:#111;letter-spacing:0.111px;">Triangle - 0x1ca340</span>
<svg class="r" style="left:121px;top:418px" width="13" height="13" viewBox="0 0 13 13"><rect x="0.5" y="0.5" width="12" height="12" fill="#fff" stroke="#333" stroke-width="1"/><path d="M2.6 6.6 L5.3 9.4 L10.6 3.2" fill="none" stroke="#4a4a4a" stroke-width="1.25"/></svg>
<span class="t" style="left:137.60px;top:418px;font-size:12px;line-height:14px;color:#111;letter-spacing:0.111px;">Triangle - 0x1ca300</span>
</div>
<div class="r" style="left:286px;top:181px;width:15px;height:423px;background:#f0f0f0;"></div>
<div class="r" style="left:286px;top:317px;width:15px;height:18px;background:#cdcdcd;"></div>
<svg class="r" style="left:289px;top:186px" width="10" height="8" viewBox="0 0 10 8"><path d="M1 6.2 L5 2 L9 6.2" fill="none" stroke="#505050" stroke-width="1.6"/></svg>
<svg class="r" style="left:289px;top:592px" width="10" height="8" viewBox="0 0 10 8"><path d="M1 1.8 L5 6 L9 1.8" fill="none" stroke="#505050" stroke-width="1.6"/></svg>
<span class="t" style="left:7.00px;top:615px;font-size:16px;line-height:17px;color:#000;font-weight:700;letter-spacing:0.832px;">Triangle</span>
<span class="t" style="left:85.00px;top:615px;font-size:16px;line-height:17px;color:#000;font-weight:700;letter-spacing:0.852px;">0x1c9640</span>
<svg class="r" style="left:267px;top:609px" width="27" height="27" viewBox="0 0 27 27"><path d="M2 9 V5 Q2 2 5 2 H9 M18 2 H22 Q25 2 25 5 V9 M25 18 V22 Q25 25 22 25 H18 M9 25 H5 Q2 25 2 22 V18" fill="none" stroke="#1010c8" stroke-width="1.9"/></svg>
<div class="r" style="left:78px;top:662px;width:1px;height:20px;background:#e2e2e2;"></div>
<div class="r" style="left:149px;top:662px;width:1px;height:20px;background:#e2e2e2;"></div>
<div class="r" style="left:220px;top:662px;width:1px;height:20px;background:#e2e2e2;"></div>
<div class="r" style="left:291px;top:662px;width:1px;height:20px;background:#e2e2e2;"></div>
<div class="r" style="left:7px;top:705px;width:285px;height:22px;background:#f4f4f4;"></div>
<span class="t" style="left:11.00px;top:666px;font-size:12px;line-height:14px;color:#000;font-weight:700;letter-spacing:0.249px;">Triangle</span>
<span class="t" style="left:139.00px;top:666px;font-size:12px;line-height:14px;color:#000;font-weight:700;">X</span>
<span class="t" style="left:210.00px;top:666px;font-size:12px;line-height:14px;color:#000;font-weight:700;">Y</span>
<span class="t" style="left:281.67px;top:666px;font-size:12px;line-height:14px;color:#000;font-weight:700;">Z</span>
<span class="t" style="left:10.00px;top:688px;font-size:12px;line-height:14px;color:#111;letter-spacing:0.497px;">Vertex 0</span>
<span class="t" style="left:122.00px;top:688px;font-size:12px;line-height:14px;color:#111;letter-spacing:0.412px;">1.60</span>
<span class="t" style="left:193.00px;top:688px;font-size:12px;line-height:14px;color:#111;letter-spacing:0.412px;">4.02</span>
<span class="t" style="left:264.00px;top:688px;font-size:12px;line-height:14px;color:#111;letter-spacing:0.412px;">0.90</span>
<span class="t" style="left:10.00px;top:710px;font-size:12px;line-height:14px;color:#111;letter-spacing:0.497px;">Vertex 1</span>
<span class="t" style="left:122.00px;top:710px;font-size:12px;line-height:14px;color:#111;letter-spacing:0.412px;">1.57</span>
<span class="t" style="left:193.00px;top:710px;font-size:12px;line-height:14px;color:#111;letter-spacing:0.412px;">4.02</span>
<span class="t" style="left:264.00px;top:710px;font-size:12px;line-height:14px;color:#111;letter-spacing:0.412px;">0.94</span>
<span class="t" style="left:10.00px;top:732px;font-size:12px;line-height:14px;color:#111;letter-spacing:0.497px;">Vertex 2</span>
<span class="t" style="left:122.00px;top:732px;font-size:12px;line-height:14px;color:#111;letter-spacing:0.412px;">1.57</span>
<span class="t" style="left:193.00px;top:732px;font-size:12px;line-height:14px;color:#111;letter-spacing:0.412px;">4.02</span>
<span class="t" style="left:264.00px;top:732px;font-size:12px;line-height:14px;color:#111;letter-spacing:0.412px;">0.91</span>
<span class="t" style="left:7.00px;top:760px;font-size:12px;line-height:14px;color:#111;letter-spacing:-0.001px;">Primitive index</span>
<span class="t" style="left:259.00px;top:760px;font-size:12px;line-height:14px;color:#111;letter-spacing:0.327px;">1755</span>
<span class="t" style="left:7.00px;top:794px;font-size:12.5px;line-height:14px;color:#000;font-weight:700;letter-spacing:0.081px;">Geometry</span>
<svg class="r" style="left:24px;top:811px" width="14" height="14" viewBox="0 0 14 14"><rect width="14" height="14" fill="#1565d8"/><path d="M3 7.2 L5.9 10.1 L11.2 3.8" fill="none" stroke="#fff" stroke-width="1.5"/></svg>
<span class="t" style="left:56.00px;top:812px;font-size:12px;line-height:14px;color:#111;letter-spacing:-0.117px;">Opaque</span>
<div class="r" style="left:7px;top:829px;width:285px;height:22px;background:#f4f4f4;"></div>
<div class="r" style="left:24px;top:833px;width:14px;height:14px;background:#e0e0e0;"></div>
<span class="t" style="left:56.00px;top:834px;font-size:12px;line-height:14px;color:#a8a8a8;letter-spacing:0.137px;">No duplicate any hit invocation</span>
<span class="t" style="left:7.00px;top:862px;font-size:12px;line-height:14px;color:#111;letter-spacing:0.164px;">Geometry index</span>
<span class="t" style="left:280.33px;top:862px;font-size:12px;line-height:14px;color:#111;">0</span>
<span class="t" style="left:7.00px;top:892px;font-size:12px;line-height:14px;color:#111;letter-spacing:0.013px;">Surface area heuristic</span>
<span class="t" style="left:267.00px;top:892px;font-size:12px;line-height:14px;color:#111;letter-spacing:0.412px;">0.87</span>
<span class="t" style="left:7.00px;top:917px;font-size:12px;line-height:14px;color:#111;letter-spacing:0.108px;">Parent</span>
<span class="t" style="left:210.00px;top:917px;font-size:12.5px;line-height:14px;color:#1212c4;font-weight:700;letter-spacing:0.896px;">0x30100d100</span>
<div class="r" style="left:103px;top:951px;width:1px;height:21px;background:#e2e2e2;"></div>
<div class="r" style="left:200px;top:951px;width:1px;height:21px;background:#e2e2e2;"></div>
<div class="r" style="left:296px;top:951px;width:1px;height:21px;background:#e2e2e2;"></div>
<div class="r" style="left:7px;top:995px;width:290px;height:22px;background:#f4f4f4;"></div>
<span class="t" style="left:11.00px;top:956px;font-size:12.5px;line-height:14px;color:#000;font-weight:700;letter-spacing:0.264px;">Extents</span>
<span class="t" style="left:175.00px;top:956px;font-size:12.5px;line-height:14px;color:#000;font-weight:700;letter-spacing:0.160px;">Min</span>
<span class="t" style="left:268.00px;top:956px;font-size:12.5px;line-height:14px;color:#000;font-weight:700;letter-spacing:0.229px;">Max</span>
<span class="t" style="left:10.00px;top:978px;font-size:12px;line-height:14px;color:#111;">X</span>
<span class="t" style="left:173.00px;top:978px;font-size:12px;line-height:14px;color:#111;letter-spacing:0.412px;">1.57</span>
<span class="t" style="left:269.00px;top:978px;font-size:12px;line-height:14px;color:#111;letter-spacing:0.412px;">1.60</span>
<span class="t" style="left:10.00px;top:1000px;font-size:12px;line-height:14px;color:#111;">Y</span>
<span class="t" style="left:173.00px;top:1000px;font-size:12px;line-height:14px;color:#111;letter-spacing:0.412px;">4.02</span>
<span class="t" style="left:269.00px;top:1000px;font-size:12px;line-height:14px;color:#111;letter-spacing:0.412px;">4.02</span>
<span class="t" style="left:10.00px;top:1022px;font-size:12px;line-height:14px;color:#111;">Z</span>
<span class="t" style="left:173.00px;top:1022px;font-size:12px;line-height:14px;color:#111;letter-spacing:0.412px;">0.90</span>
<span class="t" style="left:269.00px;top:1022px;font-size:12px;line-height:14px;color:#111;letter-spacing:0.412px;">0.94</span>
<svg class="r" style="left:306px;top:124px" width="19" height="17" viewBox="0 0 19 17"><path d="M3.6 4.2 L9.5 11.4 L15.4 4.2" fill="none" stroke="#969696" stroke-width="2.9" stroke-linecap="butt" stroke-linejoin="miter"/></svg>
<span class="t" style="left:329.00px;top:125px;font-size:12px;line-height:14px;color:#111;letter-spacing:0.262px;">Color BVH by volume type</span>
<svg class="r" style="left:514.5px;top:124px" width="19" height="17" viewBox="0 0 19 17"><path d="M3.6 4.2 L9.5 11.4 L15.4 4.2" fill="none" stroke="#969696" stroke-width="2.9" stroke-linecap="butt" stroke-linejoin="miter"/></svg>
<span class="t" style="left:538.00px;top:125px;font-size:12px;line-height:14px;color:#111;letter-spacing:0.429px;">Color geometry by SAH (Triangle)</span>
<svg class="r" style="left:1339.5px;top:124px" width="19" height="17" viewBox="0 0 19 17"><path d="M3.6 4.2 L9.5 11.4 L15.4 4.2" fill="none" stroke="#969696" stroke-width="2.9" stroke-linecap="butt" stroke-linejoin="miter"/></svg>
<span class="t" style="left:1363.00px;top:125px;font-size:12px;line-height:14px;color:#111;letter-spacing:0.538px;">Heatmap as Temperature</span>
<span class="t" style="left:307.00px;top:1037px;font-size:11px;line-height:12px;color:#111;">0</span>
<div class="r" style="left:320px;top:1035px;width:1181px;height:14px;background:#000;"></div>
<div class="r" style="left:322px;top:1037px;width:80px;height:10px;background:#b9b9b9;"></div>
<div class="r" style="left:406px;top:1037px;width:80px;height:10px;background:#848484;"></div>
<div class="r" style="left:490px;top:1037px;width:80px;height:10px;background:#848484;"></div>
<div class="r" style="left:574px;top:1037px;width:80px;height:10px;background:#848484;"></div>
<div class="r" style="left:658px;top:1037px;width:80px;height:10px;background:#848484;"></div>
<div class="r" style="left:742px;top:1037px;width:80px;height:10px;background:#848484;"></div>
<div class="r" style="left:826px;top:1037px;width:80px;height:10px;background:#848484;"></div>
<div class="r" style="left:910px;top:1037px;width:80px;height:10px;background:#848484;"></div>
<div class="r" style="left:994px;top:1037px;width:80px;height:10px;background:#848484;"></div>
<div class="r" style="left:1078px;top:1037px;width:80px;height:10px;background:#848484;"></div>
<div class="r" style="left:1162px;top:1037px;width:80px;height:10px;background:#848484;"></div>
<div class="r" style="left:1246px;top:1037px;width:80px;height:10px;background:#848484;"></div>
<div class="r" style="left:1330px;top:1037px;width:80px;height:10px;background:#848484;"></div>
<div class="r" style="left:1414px;top:1037px;width:80px;height:10px;background:#848484;"></div>
<span class="t" style="left:1507.00px;top:1037px;font-size:11px;line-height:12px;color:#111;">0</span>
<span class="t" style="left:1520.00px;top:123px;font-size:16.5px;line-height:18px;color:#000;font-weight:700;letter-spacing:0.153px;">Rendering controls</span>
<span class="t" style="left:1520.00px;top:159px;font-size:12px;line-height:14px;color:#111;letter-spacing:0.377px;">Rendering mode</span>
<svg class="r" style="left:1520px;top:179px" width="16" height="16" viewBox="0 0 16 16"><circle cx="8" cy="8" r="5.8" fill="#fff" stroke="#0f6fd0" stroke-width="3.4"/></svg>
<span class="t" style="left:1542.00px;top:180px;font-size:12px;line-height:14px;color:#111;letter-spacing:0.290px;">Geometry</span>
<svg class="r" style="left:1520px;top:201px" width="16" height="16" viewBox="0 0 16 16"><circle cx="8" cy="8" r="6.8" fill="#fff" stroke="#111" stroke-width="1.4"/></svg>
<span class="t" style="left:1542.00px;top:202px;font-size:12px;line-height:14px;color:#111;letter-spacing:0.475px;">Traversal counter</span>
<svg class="r" style="left:1520px;top:233px" width="38" height="18" viewBox="0 0 38 18"><rect x="0" y="0" width="38" height="18" rx="9" fill="#0f6fd0"/><circle cx="28.5" cy="9" r="5.4" fill="#fff"/></svg>
<span class="t" style="left:1564.00px;top:236px;font-size:12px;line-height:14px;color:#111;letter-spacing:0.510px;">Show geometry</span>
<svg class="r" style="left:1520px;top:258px" width="38" height="18" viewBox="0 0 38 18"><rect x="0" y="0" width="38" height="18" rx="9" fill="#0f6fd0"/><circle cx="28.5" cy="9" r="5.4" fill="#fff"/></svg>
<span class="t" style="left:1564.00px;top:261px;font-size:12px;line-height:14px;color:#111;letter-spacing:0.251px;">Show axis aligned BVH</span>
<svg class="r" style="left:1520px;top:283px" width="38" height="18" viewBox="0 0 38 18"><rect x="0" y="0" width="38" height="18" rx="9" fill="#0f6fd0"/><circle cx="28.5" cy="9" r="5.4" fill="#fff"/></svg>
<span class="t" style="left:1564.00px;top:286px;font-size:12px;line-height:14px;color:#111;letter-spacing:0.641px;">Show wireframe</span>
<svg class="r" style="left:1518px;top:319px" width="20" height="17" viewBox="0 0 20 17"><path d="M3.6 4.2 L10.0 11.4 L16.4 4.2" fill="none" stroke="#969696" stroke-width="2.9" stroke-linecap="butt" stroke-linejoin="miter"/></svg>
<span class="t" style="left:1542.00px;top:320px;font-size:12px;line-height:14px;color:#111;letter-spacing:0.231px;">No culling</span>
<span class="t" style="left:1520.00px;top:363px;font-size:16.5px;line-height:18px;color:#000;font-weight:700;letter-spacing:0.186px;">Camera controls</span>
<svg class="r" style="left:1518px;top:398px" width="20" height="17" viewBox="0 0 20 17"><path d="M3.6 4.2 L10.0 11.4 L16.4 4.2" fill="none" stroke="#969696" stroke-width="2.9" stroke-linecap="butt" stroke-linejoin="miter"/></svg>
<span class="t" style="left:1542.00px;top:399px;font-size:12px;line-height:14px;color:#111;letter-spacing:0.253px;">CAD control style</span>
<svg class="r" style="left:1518px;top:422px" width="20" height="17" viewBox="0 0 20 17"><path d="M3.6 4.2 L10.0 11.4 L16.4 4.2" fill="none" stroke="#969696" stroke-width="2.9" stroke-linecap="butt" stroke-linejoin="miter"/></svg>
<span class="t" style="left:1542.00px;top:423px;font-size:12px;line-height:14px;color:#111;letter-spacing:0.361px;">Perspective projection</span>
<svg class="r" style="left:1815px;top:390px" width="65" height="30" viewBox="0 0 1916 884"><rect x="235" y="200" width="1085" height="505" rx="60" fill="#0a0ae0"/><rect x="290" y="250" width="90" height="100" fill="#fff"/><rect x="440" y="250" width="90" height="100" fill="#fff"/><rect x="590" y="250" width="90" height="100" fill="#fff"/><rect x="735" y="250" width="90" height="100" fill="#fff"/><rect x="885" y="250" width="90" height="100" fill="#fff"/><rect x="1030" y="250" width="90" height="100" fill="#fff"/><rect x="1180" y="250" width="90" height="100" fill="#fff"/><rect x="290" y="400" width="160" height="100" fill="#fff"/><rect x="505" y="400" width="100" height="100" fill="#fff"/><rect x="655" y="400" width="95" height="100" fill="#fff"/><rect x="800" y="400" width="100" height="100" fill="#fff"/><rect x="950" y="400" width="95" height="100" fill="#fff"/><rect x="1095" y="400" width="175" height="100" fill="#fff"/><rect x="290" y="560" width="90" height="90" fill="#fff"/><rect x="440" y="560" width="680" height="90" fill="#fff"/><rect x="1180" y="560" width="90" height="90" fill="#fff"/><rect x="1365" y="235" width="255" height="400" rx="70" fill="#0a0ae0"/><rect x="1365" y="362" width="255" height="22" fill="#fff" opacity="0.8"/><rect x="1480" y="245" width="20" height="120" fill="#fff" opacity="0.8"/></svg>
<span class="t" style="left:1520.00px;top:456px;font-size:12px;line-height:14px;color:#111;letter-spacing:0.065px;">Application 'up' axis</span>
<span class="t" style="left:1699.00px;top:456px;font-size:12px;line-height:14px;color:#111;letter-spacing:0.057px;">Coordinate system</span>
<svg class="r" style="left:1520px;top:477px" width="16" height="16" viewBox="0 0 16 16"><circle cx="8" cy="8" r="6.8" fill="#fff" stroke="#111" stroke-width="1.4"/></svg>
<span class="t" style="left:1542.00px;top:478px;font-size:12px;line-height:14px;color:#111;">X</span>
<svg class="r" style="left:1520px;top:501px" width="16" height="16" viewBox="0 0 16 16"><circle cx="8" cy="8" r="5.8" fill="#fff" stroke="#0f6fd0" stroke-width="3.4"/></svg>
<span class="t" style="left:1542.00px;top:502px;font-size:12px;line-height:14px;color:#111;">Y</span>
<svg class="r" style="left:1520px;top:525px" width="16" height="16" viewBox="0 0 16 16"><circle cx="8" cy="8" r="6.8" fill="#fff" stroke="#111" stroke-width="1.4"/></svg>
<span class="t" style="left:1542.00px;top:526px;font-size:12px;line-height:14px;color:#111;">Z</span>
<svg class="r" style="left:1699px;top:483px" width="38" height="18" viewBox="0 0 38 18"><rect x="1" y="1" width="36" height="16" rx="8" fill="#fff" stroke="#000" stroke-width="2"/><circle cx="9.5" cy="9" r="4.6" fill="#000"/></svg>
<span class="t" style="left:1743.00px;top:486px;font-size:12px;line-height:14px;color:#111;letter-spacing:0.443px;">Invert vertical</span>
<svg class="r" style="left:1699px;top:516px" width="38" height="18" viewBox="0 0 38 18"><rect x="1" y="1" width="36" height="16" rx="8" fill="#fff" stroke="#000" stroke-width="2"/><circle cx="9.5" cy="9" r="4.6" fill="#000"/></svg>
<span class="t" style="left:1743.00px;top:519px;font-size:12px;line-height:14px;color:#111;letter-spacing:0.449px;">Invert horizontal</span>
<span class="t" style="left:1520.00px;top:559px;font-size:12px;line-height:14px;color:#111;letter-spacing:-0.158px;">Camera position</span>
<svg class="r" style="left:1853px;top:556px" width="18" height="18" viewBox="0 0 18 18"><path d="M14.05 10.3 A5.05 5.05 0 1 1 9 5.25 L11.4 5.3" fill="none" stroke="#2424d0" stroke-width="1.35"/><path d="M9 2.6 L11.9 5.3 L9 8.1" fill="none" stroke="#2424d0" stroke-width="1.35"/></svg>
<div class="r" style="left:1520px;top:579px;width:110px;height:18px;background:#fff;box-sizing:border-box;border:1px solid #7a7a7a;"></div>
<span class="t" style="left:1523.00px;top:583px;font-size:11px;line-height:12px;color:#111;letter-spacing:-0.029px;">11.0824137</span>
<div class="r" style="left:1614px;top:581px;width:14px;height:14px;background:#f0f0f0;box-sizing:border-box;border:1px solid #c4c4c4;"></div>
<svg class="r" style="left:1616.5px;top:581.5px" width="9" height="13" viewBox="0 0 9 13"><polygon points="4.5,1.5 7.6,5 1.4,5" fill="#222"/><polygon points="4.5,11.5 7.6,8 1.4,8" fill="#222"/></svg>
<div class="r" style="left:1640px;top:579px;width:110px;height:18px;background:#fff;box-sizing:border-box;border:1px solid #7a7a7a;"></div>
<span class="t" style="left:1643.00px;top:583px;font-size:11px;line-height:12px;color:#111;letter-spacing:-0.110px;">7.1510248</span>
<div class="r" style="left:1734px;top:581px;width:14px;height:14px;background:#f0f0f0;box-sizing:border-box;border:1px solid #c4c4c4;"></div>
<svg class="r" style="left:1736.5px;top:581.5px" width="9" height="13" viewBox="0 0 9 13"><polygon points="4.5,1.5 7.6,5 1.4,5" fill="#222"/><polygon points="4.5,11.5 7.6,8 1.4,8" fill="#222"/></svg>
<div class="r" style="left:1760px;top:579px;width:110px;height:18px;background:#fff;box-sizing:border-box;border:1px solid #7a7a7a;"></div>
<span class="t" style="left:1763.00px;top:583px;font-size:11px;line-height:12px;color:#111;letter-spacing:-0.111px;">12.4755030</span>
<div class="r" style="left:1854px;top:581px;width:14px;height:14px;background:#f0f0f0;box-sizing:border-box;border:1px solid #c4c4c4;"></div>
<svg class="r" style="left:1856.5px;top:581.5px" width="9" height="13" viewBox="0 0 9 13"><polygon points="4.5,1.5 7.6,5 1.4,5" fill="#222"/><polygon points="4.5,11.5 7.6,8 1.4,8" fill="#222"/></svg>
<span class="t" style="left:1520.00px;top:614px;font-size:12px;line-height:14px;color:#111;letter-spacing:0.101px;">Field of view</span>
<span class="t" style="left:1855.65px;top:614px;font-size:12px;line-height:14px;color:#111;">42</span>
<div class="r" style="left:1520px;top:643px;width:350px;height:2px;background:#b0b0b0;"></div>
<div class="r" style="left:1565px;top:633px;width:6px;height:22px;background:#0f6fd0;"></div>
<span class="t" style="left:1520.00px;top:682px;font-size:12px;line-height:14px;color:#111;letter-spacing:0.211px;">Movement speed</span>
<span class="t" style="left:1862.33px;top:682px;font-size:12px;line-height:14px;color:#111;">3</span>
<div class="r" style="left:1520px;top:711px;width:350px;height:2px;background:#b0b0b0;"></div>
<div class="r" style="left:1587px;top:701px;width:6px;height:22px;background:#0f6fd0;"></div>
<svg class="r" style="left:1886px;top:78px" width="30" height="34" viewBox="0 0 30 34"><path d="M25.4 21.1 A9.7 9.7 0 1 1 15.8 10 L21.4 10.1" fill="none" stroke="#1414dc" stroke-width="2"/><path d="M15.1 5.1 L21.9 10.2 L15.4 15.9" fill="none" stroke="#1414dc" stroke-width="2"/></svg>
<span class="t" style="left:1894px;top:122px;font-size:12.5px;font-weight:700;line-height:15px;letter-spacing:0.05px;writing-mode:vertical-rl;color:#000">Hide controls</span>
</body></html>
